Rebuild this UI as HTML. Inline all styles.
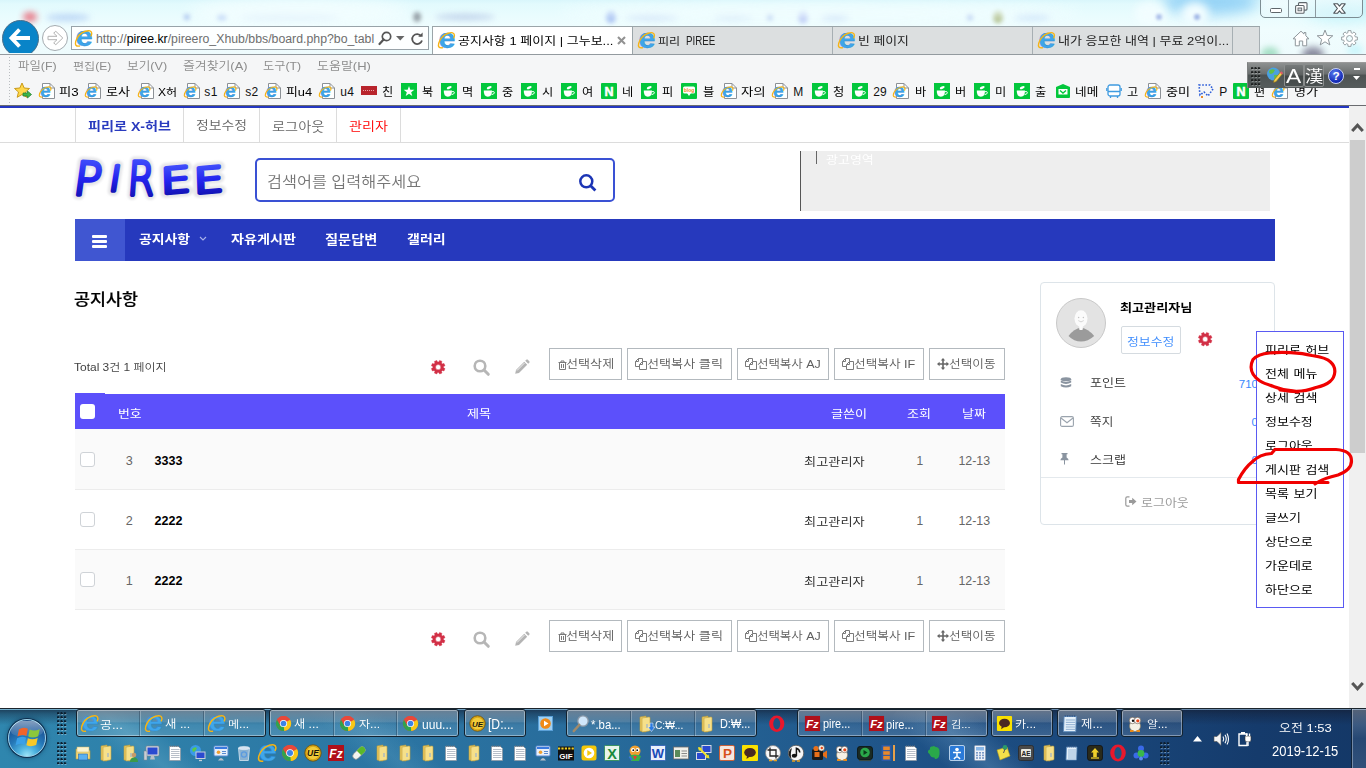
<!DOCTYPE html>
<html lang="ko">
<head>
<meta charset="utf-8">
<title>공지사항 1 페이지 | 그누보드5</title>
<style>
*{box-sizing:border-box;margin:0;padding:0}
html,body{width:1366px;height:768px;overflow:hidden;background:#fff}
body{font-family:"Liberation Sans","Noto Sans CJK KR","NanumGothic",sans-serif;font-size:12px;color:#000}
#screen{position:absolute;left:0;top:0;width:1366px;height:768px;overflow:hidden;background:#fff}
.p{position:absolute;white-space:nowrap}
svg.p{overflow:visible}
</style>
</head>
<body>
<div id="screen">
<!-- ===== PAGE ===== -->
<div class="p" style="left:0px;top:105px;width:1366px;height:1px;background:#6a6c70"></div>
<div class="p" style="left:0px;top:106px;width:1349px;height:2px;background:#2437c0"></div>
<div class="p" style="left:75px;top:108px;width:1px;height:34px;background:#dcdcdc"></div>
<div class="p" style="left:183px;top:108px;width:1px;height:34px;background:#dcdcdc"></div>
<div class="p" style="left:259px;top:108px;width:1px;height:34px;background:#dcdcdc"></div>
<div class="p" style="left:336px;top:108px;width:1px;height:34px;background:#dcdcdc"></div>
<div class="p" style="left:400px;top:108px;width:1px;height:34px;background:#dcdcdc"></div>
<div class="p" style="left:0px;top:142px;width:1350px;height:1px;background:#dcdcdc"></div>
<div class="p" style="left:87.7px;top:117.5px;font-size:12.5px;line-height:18px;color:#2a3bbf;font-weight:bold;transform:scaleX(1.13);transform-origin:0 50%;">피리로 X-허브</div>
<div class="p" style="left:195.6px;top:118.0px;font-size:12.3px;line-height:17px;color:#666;font-weight:350;transform:scaleX(1.13);transform-origin:0 50%;">정보수정</div>
<div class="p" style="left:271.7px;top:117.5px;font-size:12.6px;line-height:18px;color:#666;font-weight:350;transform:scaleX(1.13);transform-origin:0 50%;">로그아웃</div>
<div class="p" style="left:348.7px;top:117.5px;font-size:12.5px;line-height:18px;color:#f00;font-weight:350;transform:scaleX(1.13);transform-origin:0 50%;">관리자</div>
<svg class="p" style="left:70px;top:150px;" width="165" height="58" viewBox="0 0 165 58"><defs><linearGradient id="lg" x1="0" y1="0" x2="0" y2="1"><stop offset="0" stop-color="#4a5cff"/><stop offset=".5" stop-color="#2323ee"/><stop offset="1" stop-color="#0c0c9c"/></linearGradient>
<filter id="glow" x="-20%" y="-30%" width="140%" height="160%"><feGaussianBlur stdDeviation="1.2"/></filter></defs>
<g font-family="'DejaVu Sans Light','DejaVu Sans','Liberation Sans',sans-serif" font-style="normal" font-weight="200" stroke-linejoin="round" stroke-linecap="round">
<g fill="#e6e6e9" stroke="#e6e6e9" stroke-width="9.500" filter="url(#glow)"><text transform="rotate(3 19.6 28.6) translate(3.2 45.4) skewX(-5) scale(0.978 1)" font-size="46.0">P</text><text transform="rotate(2 45.4 28.4) translate(38.7 41.1) skewX(-7) scale(1.000 1)" font-size="35.0">I</text><text transform="rotate(0 72.8 28.5) translate(56.8 45.4) skewX(-4) scale(0.834 1)" font-size="46.4">R</text><text transform="rotate(-5 106.5 29.6) translate(90.2 42.3) skewX(-3) scale(1.351 1)" font-size="34.8">E</text><text transform="rotate(-5 139.4 29.5) translate(123.2 42.1) skewX(-3) scale(1.355 1)" font-size="34.6">E</text></g>
<g fill="url(#lg)" stroke="url(#lg)" stroke-width="3.800"><text transform="rotate(3 19.6 28.6) translate(3.2 45.4) skewX(-5) scale(0.978 1)" font-size="46.0">P</text><text transform="rotate(2 45.4 28.4) translate(38.7 41.1) skewX(-7) scale(1.000 1)" font-size="35.0">I</text><text transform="rotate(0 72.8 28.5) translate(56.8 45.4) skewX(-4) scale(0.834 1)" font-size="46.4">R</text><text transform="rotate(-5 106.5 29.6) translate(90.2 42.3) skewX(-3) scale(1.351 1)" font-size="34.8">E</text><text transform="rotate(-5 139.4 29.5) translate(123.2 42.1) skewX(-3) scale(1.355 1)" font-size="34.6">E</text></g>
</g></svg>
<div class="p" style="left:255px;top:158px;width:360px;height:44px;border:2px solid #3a51d4;border-radius:5px;background:#fff"></div>
<div class="p" style="left:267.0px;top:172.0px;font-size:14.4px;line-height:20px;color:#767676;font-weight:350;transform:scaleX(1.13);transform-origin:0 50%;">검색어를 입력해주세요</div>
<svg class="p" style="left:578.3px;top:172.7px;" width="20" height="20" viewBox="0 0 20 20"><circle cx="8.300" cy="8.300" r="6" fill="none" stroke="#1c35b5" stroke-width="2.500"/><path d="M12.400 12.400 L17.400 17.400" stroke="#1c35b5" stroke-width="2.800" stroke-linecap="butt"/></svg>
<div class="p" style="left:801px;top:151px;width:469px;height:60px;background:#eee"></div>
<div class="p" style="left:800px;top:151px;width:1px;height:60px;background:#555"></div>
<div class="p" style="left:816px;top:151px;width:1px;height:13px;background:#666"></div>
<div class="p" style="left:826.4px;top:151.7px;font-size:11.5px;line-height:16px;color:#fff;font-weight:350;transform:scaleX(1.13);transform-origin:0 50%;font-weight:400;">광고영역</div>
<div class="p" style="left:75px;top:219px;width:1200px;height:42px;background:#2639bd"></div>
<div class="p" style="left:75px;top:219px;width:50px;height:42px;background:#4056d1"></div>
<div class="p" style="left:92px;top:235px;width:15px;height:3px;background:#fff;border-radius:1px"></div>
<div class="p" style="left:92px;top:240px;width:15px;height:3px;background:#fff;border-radius:1px"></div>
<div class="p" style="left:92px;top:245px;width:15px;height:3px;background:#fff;border-radius:1px"></div>
<div class="p" style="left:139.0px;top:231.7px;font-size:12.3px;line-height:17px;color:#fff;font-weight:bold;transform:scaleX(1.13);transform-origin:0 50%;">공지사항</div>
<svg class="p" style="left:199px;top:236px;" width="8" height="6" viewBox="0 0 8 6"><path d="M1 1 L4 4 L7 1" fill="none" stroke="#aab3ea" stroke-width="1.1"/></svg>
<div class="p" style="left:230.7px;top:231.2px;font-size:12.5px;line-height:18px;color:#fff;font-weight:bold;transform:scaleX(1.13);transform-origin:0 50%;">자유게시판</div>
<div class="p" style="left:325.3px;top:231.2px;font-size:12.6px;line-height:18px;color:#fff;font-weight:bold;transform:scaleX(1.13);transform-origin:0 50%;">질문답변</div>
<div class="p" style="left:407.0px;top:231.7px;font-size:12.4px;line-height:17px;color:#fff;font-weight:bold;transform:scaleX(1.13);transform-origin:0 50%;">갤러리</div>
<div class="p" style="left:74.0px;top:288.7px;font-size:15.4px;line-height:22px;color:#000;font-weight:bold;transform:scaleX(1.13);transform-origin:0 50%;font-weight:500;-webkit-text-stroke:.2px #000;">공지사항</div>
<div class="p" style="left:74.4px;top:359.7px;font-size:10.6px;line-height:15px;color:#444;font-weight:350;transform:scaleX(1.13);transform-origin:0 50%;">Total 3건 1 페이지</div>
<svg class="p" style="left:430.9px;top:359.6px;" width="14.4" height="14.4" viewBox="0 0 16 16"><path fill-rule="evenodd" fill="#d23046" stroke="#d23046" stroke-width=".5" stroke-linejoin="round" d="M13.85 8.74 L15.54 9.56 L14.44 12.23 L12.66 11.62 L11.62 12.66 L12.23 14.44 L9.56 15.54 L8.74 13.85 L7.26 13.85 L6.44 15.54 L3.77 14.44 L4.38 12.66 L3.34 11.62 L1.56 12.23 L0.46 9.56 L2.15 8.74 L2.15 7.26 L0.46 6.44 L1.56 3.77 L3.34 4.38 L4.38 3.34 L3.77 1.56 L6.44 0.46 L7.26 2.15 L8.74 2.15 L9.56 0.46 L12.23 1.56 L11.62 3.34 L12.66 4.38 L14.44 3.77 L15.54 6.44 L13.85 7.26Z M10.90 8.00 A2.9 2.9 0 1 0 5.10 8.00 A2.9 2.9 0 1 0 10.90 8.00Z"/></svg>
<svg class="p" style="left:473.0px;top:358.5px;" width="17" height="17" viewBox="0 0 17 17"><circle cx="7" cy="7" r="5.300" fill="none" stroke="#b6b6b6" stroke-width="2.600"/><path d="M11 11 L15.300 15.300" stroke="#b6b6b6" stroke-width="3" stroke-linecap="round"/></svg>
<svg class="p" style="left:513.5px;top:359.0px;" width="16" height="16" viewBox="0 0 16 16"><path fill="#b4b4b4" d="M1.2 14.8 L2 11 L10.2 2.8 L13.2 5.8 L5 14 Z M11.2 1.8 L12.3 .7 Q13 0 13.8 .7 L15.3 2.2 Q16 3 15.3 3.7 L14.2 4.8 Z"/><path d="M3 11.5 L10.5 4" stroke="#fff" stroke-width=".8"/></svg>
<div class="p" style="left:549px;top:348px;width:73px;height:32px;border:1px solid #b3b9be;background:#fff"></div>
<div class="p" style="left:627px;top:348px;width:105px;height:32px;border:1px solid #b3b9be;background:#fff"></div>
<div class="p" style="left:737px;top:348px;width:92px;height:32px;border:1px solid #b3b9be;background:#fff"></div>
<div class="p" style="left:834px;top:348px;width:90px;height:32px;border:1px solid #b3b9be;background:#fff"></div>
<div class="p" style="left:929px;top:348px;width:76px;height:32px;border:1px solid #b3b9be;background:#fff"></div>
<svg class="p" style="left:557.5px;top:359.5px;" width="9" height="10" viewBox="0 0 9 10"><path fill="none" stroke="#7a7a7a" stroke-width="1" d="M.5 2.5 H8.5 M3 2.5 V1 H6 V2.5 M1.5 2.5 V9.5 H7.5 V2.5 M3.5 4 V8 M5.5 4 V8"/></svg>
<div class="p" style="left:566.1px;top:356.3px;font-size:11.6px;line-height:16px;color:#5e5e5e;font-weight:350;transform:scaleX(1.13);transform-origin:0 50%;">선택삭제</div>
<svg class="p" style="left:635px;top:357.5px;" width="12" height="12" viewBox="0 0 12 12"><path fill="#fff" stroke="#7a7a7a" stroke-width="1" d="M3.5 .5 H7.5 V3 M3.5 .5 L.5 3.5 V8.5 H4.5 M3.5 .5 V3.5 H.5"/><path fill="#fff" stroke="#7a7a7a" stroke-width="1" d="M7.5 3.5 H11.5 V11.5 H4.5 V6.5 Z M7.5 3.5 V6.5 H4.5"/></svg>
<div class="p" style="left:647.2px;top:356.3px;font-size:11.6px;line-height:16px;color:#5e5e5e;font-weight:350;transform:scaleX(1.13);transform-origin:0 50%;">선택복사 클릭</div>
<svg class="p" style="left:745px;top:357.5px;" width="12" height="12" viewBox="0 0 12 12"><path fill="#fff" stroke="#7a7a7a" stroke-width="1" d="M3.5 .5 H7.5 V3 M3.5 .5 L.5 3.5 V8.5 H4.5 M3.5 .5 V3.5 H.5"/><path fill="#fff" stroke="#7a7a7a" stroke-width="1" d="M7.5 3.5 H11.5 V11.5 H4.5 V6.5 Z M7.5 3.5 V6.5 H4.5"/></svg>
<div class="p" style="left:756.8px;top:356.8px;font-size:11.0px;line-height:15px;color:#5e5e5e;font-weight:350;transform:scaleX(1.13);transform-origin:0 50%;">선택복사 AJ</div>
<svg class="p" style="left:842px;top:357.5px;" width="12" height="12" viewBox="0 0 12 12"><path fill="#fff" stroke="#7a7a7a" stroke-width="1" d="M3.5 .5 H7.5 V3 M3.5 .5 L.5 3.5 V8.5 H4.5 M3.5 .5 V3.5 H.5"/><path fill="#fff" stroke="#7a7a7a" stroke-width="1" d="M7.5 3.5 H11.5 V11.5 H4.5 V6.5 Z M7.5 3.5 V6.5 H4.5"/></svg>
<div class="p" style="left:854.4px;top:356.3px;font-size:11.2px;line-height:16px;color:#5e5e5e;font-weight:350;transform:scaleX(1.13);transform-origin:0 50%;">선택복사 IF</div>
<svg class="p" style="left:936.5px;top:357.5px;" width="12" height="12" viewBox="0 0 12 12"><path fill="#666" d="M6 0 L8.2 2.6 H6.8 V5.2 H9.4 V3.8 L12 6 L9.4 8.2 V6.8 H6.8 V9.4 H8.2 L6 12 L3.8 9.4 H5.2 V6.8 H2.6 V8.2 L0 6 L2.6 3.8 V5.2 H5.2 V2.6 H3.8 Z"/></svg>
<div class="p" style="left:949.4px;top:356.3px;font-size:11.2px;line-height:16px;color:#5e5e5e;font-weight:350;transform:scaleX(1.13);transform-origin:0 50%;">선택이동</div>
<svg class="p" style="left:430.9px;top:631.6px;" width="14.4" height="14.4" viewBox="0 0 16 16"><path fill-rule="evenodd" fill="#d23046" stroke="#d23046" stroke-width=".5" stroke-linejoin="round" d="M13.85 8.74 L15.54 9.56 L14.44 12.23 L12.66 11.62 L11.62 12.66 L12.23 14.44 L9.56 15.54 L8.74 13.85 L7.26 13.85 L6.44 15.54 L3.77 14.44 L4.38 12.66 L3.34 11.62 L1.56 12.23 L0.46 9.56 L2.15 8.74 L2.15 7.26 L0.46 6.44 L1.56 3.77 L3.34 4.38 L4.38 3.34 L3.77 1.56 L6.44 0.46 L7.26 2.15 L8.74 2.15 L9.56 0.46 L12.23 1.56 L11.62 3.34 L12.66 4.38 L14.44 3.77 L15.54 6.44 L13.85 7.26Z M10.90 8.00 A2.9 2.9 0 1 0 5.10 8.00 A2.9 2.9 0 1 0 10.90 8.00Z"/></svg>
<svg class="p" style="left:473.0px;top:630.5px;" width="17" height="17" viewBox="0 0 17 17"><circle cx="7" cy="7" r="5.300" fill="none" stroke="#b6b6b6" stroke-width="2.600"/><path d="M11 11 L15.300 15.300" stroke="#b6b6b6" stroke-width="3" stroke-linecap="round"/></svg>
<svg class="p" style="left:513.5px;top:631.0px;" width="16" height="16" viewBox="0 0 16 16"><path fill="#b4b4b4" d="M1.2 14.8 L2 11 L10.2 2.8 L13.2 5.8 L5 14 Z M11.2 1.8 L12.3 .7 Q13 0 13.8 .7 L15.3 2.2 Q16 3 15.3 3.7 L14.2 4.8 Z"/><path d="M3 11.5 L10.5 4" stroke="#fff" stroke-width=".8"/></svg>
<div class="p" style="left:549px;top:620px;width:73px;height:32px;border:1px solid #b3b9be;background:#fff"></div>
<div class="p" style="left:627px;top:620px;width:105px;height:32px;border:1px solid #b3b9be;background:#fff"></div>
<div class="p" style="left:737px;top:620px;width:92px;height:32px;border:1px solid #b3b9be;background:#fff"></div>
<div class="p" style="left:834px;top:620px;width:90px;height:32px;border:1px solid #b3b9be;background:#fff"></div>
<div class="p" style="left:929px;top:620px;width:76px;height:32px;border:1px solid #b3b9be;background:#fff"></div>
<svg class="p" style="left:557.5px;top:631.5px;" width="9" height="10" viewBox="0 0 9 10"><path fill="none" stroke="#7a7a7a" stroke-width="1" d="M.5 2.5 H8.5 M3 2.5 V1 H6 V2.5 M1.5 2.5 V9.5 H7.5 V2.5 M3.5 4 V8 M5.5 4 V8"/></svg>
<div class="p" style="left:566.1px;top:628.3px;font-size:11.6px;line-height:16px;color:#5e5e5e;font-weight:350;transform:scaleX(1.13);transform-origin:0 50%;">선택삭제</div>
<svg class="p" style="left:635px;top:629.5px;" width="12" height="12" viewBox="0 0 12 12"><path fill="#fff" stroke="#7a7a7a" stroke-width="1" d="M3.5 .5 H7.5 V3 M3.5 .5 L.5 3.5 V8.5 H4.5 M3.5 .5 V3.5 H.5"/><path fill="#fff" stroke="#7a7a7a" stroke-width="1" d="M7.5 3.5 H11.5 V11.5 H4.5 V6.5 Z M7.5 3.5 V6.5 H4.5"/></svg>
<div class="p" style="left:647.2px;top:628.3px;font-size:11.6px;line-height:16px;color:#5e5e5e;font-weight:350;transform:scaleX(1.13);transform-origin:0 50%;">선택복사 클릭</div>
<svg class="p" style="left:745px;top:629.5px;" width="12" height="12" viewBox="0 0 12 12"><path fill="#fff" stroke="#7a7a7a" stroke-width="1" d="M3.5 .5 H7.5 V3 M3.5 .5 L.5 3.5 V8.5 H4.5 M3.5 .5 V3.5 H.5"/><path fill="#fff" stroke="#7a7a7a" stroke-width="1" d="M7.5 3.5 H11.5 V11.5 H4.5 V6.5 Z M7.5 3.5 V6.5 H4.5"/></svg>
<div class="p" style="left:756.8px;top:628.8px;font-size:11.0px;line-height:15px;color:#5e5e5e;font-weight:350;transform:scaleX(1.13);transform-origin:0 50%;">선택복사 AJ</div>
<svg class="p" style="left:842px;top:629.5px;" width="12" height="12" viewBox="0 0 12 12"><path fill="#fff" stroke="#7a7a7a" stroke-width="1" d="M3.5 .5 H7.5 V3 M3.5 .5 L.5 3.5 V8.5 H4.5 M3.5 .5 V3.5 H.5"/><path fill="#fff" stroke="#7a7a7a" stroke-width="1" d="M7.5 3.5 H11.5 V11.5 H4.5 V6.5 Z M7.5 3.5 V6.5 H4.5"/></svg>
<div class="p" style="left:854.4px;top:628.3px;font-size:11.2px;line-height:16px;color:#5e5e5e;font-weight:350;transform:scaleX(1.13);transform-origin:0 50%;">선택복사 IF</div>
<svg class="p" style="left:936.5px;top:629.5px;" width="12" height="12" viewBox="0 0 12 12"><path fill="#666" d="M6 0 L8.2 2.6 H6.8 V5.2 H9.4 V3.8 L12 6 L9.4 8.2 V6.8 H6.8 V9.4 H8.2 L6 12 L3.8 9.4 H5.2 V6.8 H2.6 V8.2 L0 6 L2.6 3.8 V5.2 H5.2 V2.6 H3.8 Z"/></svg>
<div class="p" style="left:949.4px;top:628.3px;font-size:11.2px;line-height:16px;color:#5e5e5e;font-weight:350;transform:scaleX(1.13);transform-origin:0 50%;">선택이동</div>
<div class="p" style="left:75px;top:394px;width:930px;height:35px;background:#5c50fb"></div>
<div class="p" style="left:75px;top:393px;width:30px;height:2px;background:#5c50fb"></div>
<div class="p" style="left:80px;top:404px;width:15px;height:15px;background:#fff;border-radius:3px"></div>
<div class="p" style="left:118.0px;top:405.8px;font-size:11.4px;line-height:16px;color:#fff;font-weight:350;transform:scaleX(1.13);transform-origin:0 50%;font-weight:400;">번호</div>
<div class="p" style="left:467.4px;top:405.8px;font-size:11.6px;line-height:16px;color:#fff;font-weight:350;transform:scaleX(1.13);transform-origin:0 50%;font-weight:400;">제목</div>
<div class="p" style="left:831.2px;top:405.8px;font-size:11.6px;line-height:16px;color:#fff;font-weight:350;transform:scaleX(1.13);transform-origin:0 50%;font-weight:400;">글쓴이</div>
<div class="p" style="left:907.4px;top:405.8px;font-size:11.5px;line-height:16px;color:#fff;font-weight:350;transform:scaleX(1.13);transform-origin:0 50%;font-weight:400;">조회</div>
<div class="p" style="left:962.4px;top:405.8px;font-size:11.5px;line-height:16px;color:#fff;font-weight:350;transform:scaleX(1.13);transform-origin:0 50%;font-weight:400;">날짜</div>
<div class="p" style="left:75px;top:429px;width:930px;height:60px;background:#fafafa"></div>
<div class="p" style="left:75px;top:489px;width:930px;height:1px;background:#ececec"></div>
<div class="p" style="left:75px;top:549px;width:930px;height:1px;background:#ececec"></div>
<div class="p" style="left:75px;top:550px;width:930px;height:59px;background:#fafafa"></div>
<div class="p" style="left:75px;top:609px;width:930px;height:1px;background:#ececec"></div>
<div class="p" style="left:80px;top:452px;width:15px;height:15px;border:1px solid #cfd3d7;border-radius:3px;background:#fff"></div>
<div class="p" style="left:125.8px;top:452.1px;font-size:12.6px;line-height:18px;color:#666;">3</div>
<div class="p" style="left:154.6px;top:452.1px;font-size:12.5px;line-height:18px;color:#000;font-weight:bold;">3333</div>
<div class="p" style="left:803.9px;top:453.5px;font-size:11.7px;line-height:16px;color:#222;font-weight:350;transform:scaleX(1.13);transform-origin:0 50%;">최고관리자</div>
<div class="p" style="left:916.5px;top:452.6px;font-size:12px;line-height:17px;color:#666;">1</div>
<div class="p" style="left:958.4px;top:452.6px;font-size:12.4px;line-height:17px;color:#666;">12-13</div>
<div class="p" style="left:80px;top:512px;width:15px;height:15px;border:1px solid #cfd3d7;border-radius:3px;background:#fff"></div>
<div class="p" style="left:125.8px;top:512.1px;font-size:12.6px;line-height:18px;color:#666;">2</div>
<div class="p" style="left:154.6px;top:512.1px;font-size:12.5px;line-height:18px;color:#000;font-weight:bold;">2222</div>
<div class="p" style="left:803.9px;top:513.5px;font-size:11.7px;line-height:16px;color:#222;font-weight:350;transform:scaleX(1.13);transform-origin:0 50%;">최고관리자</div>
<div class="p" style="left:916.5px;top:512.6px;font-size:12px;line-height:17px;color:#666;">1</div>
<div class="p" style="left:958.4px;top:512.6px;font-size:12.4px;line-height:17px;color:#666;">12-13</div>
<div class="p" style="left:80px;top:572px;width:15px;height:15px;border:1px solid #cfd3d7;border-radius:3px;background:#fff"></div>
<div class="p" style="left:125.8px;top:572.1px;font-size:12.6px;line-height:18px;color:#666;">1</div>
<div class="p" style="left:154.6px;top:572.1px;font-size:12.5px;line-height:18px;color:#000;font-weight:bold;">2222</div>
<div class="p" style="left:803.9px;top:573.5px;font-size:11.7px;line-height:16px;color:#222;font-weight:350;transform:scaleX(1.13);transform-origin:0 50%;">최고관리자</div>
<div class="p" style="left:916.5px;top:572.6px;font-size:12px;line-height:17px;color:#666;">1</div>
<div class="p" style="left:958.4px;top:572.6px;font-size:12.4px;line-height:17px;color:#666;">12-13</div>
<div class="p" style="left:1040px;top:282px;width:235px;height:243px;border:1px solid #dde4e9;border-radius:4px;background:#fff"></div>
<div class="p" style="left:1041px;top:477px;width:233px;height:1px;background:#e4e9ed"></div>
<div class="p" style="left:1056px;top:298px;width:50px;height:50px;border-radius:50%;background:#e3e3e3;border:1px solid #c9c9c9;overflow:hidden"><svg width="48" height="48" viewBox="0 0 48 48"><path d="M11.500 37 Q17 29.500 24 28.500 Q31 29.500 37.200 37 Q31 42.600 24 42.600 Q17 42.600 11.500 37Z" fill="#9b9b9b"/><ellipse cx="24" cy="19.600" rx="6.500" ry="8.400" fill="#fbfbfb"/><path d="M22.200 26 h3.600 v4.600 q-1.800 1 -3.600 0z" fill="#fbfbfb"/><circle cx="21.600" cy="18.600" r=".75" fill="#c4c4c4"/><circle cx="26.400" cy="18.600" r=".75" fill="#c4c4c4"/><path d="M21.300 21.600 Q24 24.200 26.700 21.600" stroke="#c4c4c4" stroke-width=".7" fill="none"/></svg></div>
<div class="p" style="left:1119.7px;top:300.1px;font-size:11.6px;line-height:16px;color:#000;font-weight:bold;transform:scaleX(1.13);transform-origin:0 50%;">최고관리자님</div>
<div class="p" style="left:1121px;top:326px;width:60px;height:28px;border:1px solid #d5dbe0;border-radius:2px;background:#fff"></div>
<div class="p" style="left:1126.8px;top:333.5px;font-size:11.4px;line-height:16px;color:#3a8afd;font-weight:350;transform:scaleX(1.13);transform-origin:0 50%;">정보수정</div>
<svg class="p" style="left:1198.3px;top:332.3px;" width="14.4" height="14.4" viewBox="0 0 16 16"><path fill-rule="evenodd" fill="#d23046" stroke="#d23046" stroke-width=".5" stroke-linejoin="round" d="M13.85 8.74 L15.54 9.56 L14.44 12.23 L12.66 11.62 L11.62 12.66 L12.23 14.44 L9.56 15.54 L8.74 13.85 L7.26 13.85 L6.44 15.54 L3.77 14.44 L4.38 12.66 L3.34 11.62 L1.56 12.23 L0.46 9.56 L2.15 8.74 L2.15 7.26 L0.46 6.44 L1.56 3.77 L3.34 4.38 L4.38 3.34 L3.77 1.56 L6.44 0.46 L7.26 2.15 L8.74 2.15 L9.56 0.46 L12.23 1.56 L11.62 3.34 L12.66 4.38 L14.44 3.77 L15.54 6.44 L13.85 7.26Z M10.90 8.00 A2.9 2.9 0 1 0 5.10 8.00 A2.9 2.9 0 1 0 10.90 8.00Z"/></svg>
<svg class="p" style="left:1060px;top:377px;" width="12" height="12" viewBox="0 0 12 12"><g fill="#8a94a0"><ellipse cx="6" cy="2.2" rx="5.2" ry="2"/><path d="M.8 3.6 Q6 6.4 11.200 3.600 V5.6 Q6 8.4 .8 5.6Z"/><path d="M.8 7 Q6 9.800 11.200 7 V9.200 Q6 12 .8 9.200Z"/></g></svg>
<svg class="p" style="left:1060px;top:416px;" width="14" height="11" viewBox="0 0 14 11"><rect x=".6" y=".6" width="12.8" height="9.8" rx="1.5" fill="none" stroke="#9aa3ad" stroke-width="1.1"/><path d="M1 2 L7 6.8 L13 2" fill="none" stroke="#9aa3ad" stroke-width="1.1"/></svg>
<svg class="p" style="left:1060px;top:453px;" width="9" height="12" viewBox="0 0 9 12"><path fill="#8a94a0" d="M1.500 0 H7.500 V1.2 H6.6 V4.500 Q8.6 5.500 8.6 7.200 H5 V11 L4.500 12 L4 11 V7.200 H.4 Q.4 5.500 2.400 4.500 V1.2 H1.500Z"/></svg>
<div class="p" style="left:1090.4px;top:375.4px;font-size:11.6px;line-height:16px;color:#333;font-weight:350;transform:scaleX(1.13);transform-origin:0 50%;">포인트</div>
<div class="p" style="left:1090.4px;top:413.6px;font-size:11.2px;line-height:16px;color:#333;font-weight:350;transform:scaleX(1.13);transform-origin:0 50%;">쪽지</div>
<div class="p" style="left:1090.4px;top:451.7px;font-size:11.6px;line-height:16px;color:#333;font-weight:350;transform:scaleX(1.13);transform-origin:0 50%;">스크랩</div>
<div class="p" style="left:1238.8px;top:375.7px;font-size:11.5px;line-height:16px;color:#3a8afd;">710</div>
<div class="p" style="left:1251.6px;top:413.7px;font-size:11.5px;line-height:16px;color:#3a8afd;">0</div>
<div class="p" style="left:1251.6px;top:451.7px;font-size:11.5px;line-height:16px;color:#3a8afd;">0</div>
<svg class="p" style="left:1125px;top:496px;" width="12" height="11" viewBox="0 0 12 11"><path fill="none" stroke="#9a9a9a" stroke-width="1.2" d="M4.500 .8 H2.200 Q.8 .8 .8 2.200 V8.800 Q.8 10.200 2.200 10.200 H4.500"/><path fill="#9a9a9a" d="M4 4 H7.200 V1.800 L11.500 5.500 L7.200 9.200 V7 H4Z"/></svg>
<div class="p" style="left:1140.6px;top:494.6px;font-size:11.5px;line-height:16px;color:#9c9c9c;font-weight:350;transform:scaleX(1.13);transform-origin:0 50%;font-weight:400;">로그아웃</div>
<div class="p" style="left:1349px;top:106px;width:17px;height:602px;background:#f0f0f0"></div>
<div class="p" style="left:1350px;top:140px;width:15px;height:313px;background:#cdcdcd"></div>
<svg class="p" style="left:1351px;top:122px;" width="13" height="11" viewBox="0 0 13 11"><path d="M1.200 9 L6.500 3.200 L11.800 9" fill="none" stroke="#555" stroke-width="3" stroke-linejoin="miter"/></svg>
<svg class="p" style="left:1351px;top:681px;" width="13" height="11" viewBox="0 0 13 11"><path d="M1.200 2 L6.500 7.800 L11.800 2" fill="none" stroke="#555" stroke-width="3" stroke-linejoin="miter"/></svg>
<div class="p" style="left:1256px;top:331px;width:88px;height:277px;border:1px solid #5a5af2;background:#fff"></div>
<div class="p" style="left:1264.6px;top:341.7px;font-size:11.5px;line-height:16px;color:#000;font-weight:350;transform:scaleX(1.13);transform-origin:0 50%;word-spacing:.8px;font-weight:400;">피리로 허브</div>
<div class="p" style="left:1264.6px;top:365.7px;font-size:11.5px;line-height:16px;color:#000;font-weight:350;transform:scaleX(1.13);transform-origin:0 50%;word-spacing:.8px;font-weight:400;">전체 메뉴</div>
<div class="p" style="left:1264.6px;top:389.7px;font-size:11.5px;line-height:16px;color:#000;font-weight:350;transform:scaleX(1.13);transform-origin:0 50%;word-spacing:.8px;font-weight:400;">상세 검색</div>
<div class="p" style="left:1264.6px;top:413.7px;font-size:11.5px;line-height:16px;color:#000;font-weight:350;transform:scaleX(1.13);transform-origin:0 50%;word-spacing:.8px;font-weight:400;">정보수정</div>
<div class="p" style="left:1264.6px;top:437.7px;font-size:11.5px;line-height:16px;color:#000;font-weight:350;transform:scaleX(1.13);transform-origin:0 50%;word-spacing:.8px;font-weight:400;">로그아웃</div>
<div class="p" style="left:1264.6px;top:461.7px;font-size:11.5px;line-height:16px;color:#000;font-weight:350;transform:scaleX(1.13);transform-origin:0 50%;word-spacing:.8px;font-weight:400;">게시판 검색</div>
<div class="p" style="left:1264.6px;top:485.7px;font-size:11.5px;line-height:16px;color:#000;font-weight:350;transform:scaleX(1.13);transform-origin:0 50%;word-spacing:.8px;font-weight:400;">목록 보기</div>
<div class="p" style="left:1264.6px;top:509.7px;font-size:11.5px;line-height:16px;color:#000;font-weight:350;transform:scaleX(1.13);transform-origin:0 50%;word-spacing:.8px;font-weight:400;">글쓰기</div>
<div class="p" style="left:1264.6px;top:533.7px;font-size:11.5px;line-height:16px;color:#000;font-weight:350;transform:scaleX(1.13);transform-origin:0 50%;word-spacing:.8px;font-weight:400;">상단으로</div>
<div class="p" style="left:1264.6px;top:557.7px;font-size:11.5px;line-height:16px;color:#000;font-weight:350;transform:scaleX(1.13);transform-origin:0 50%;word-spacing:.8px;font-weight:400;">가운데로</div>
<div class="p" style="left:1264.6px;top:581.7px;font-size:11.5px;line-height:16px;color:#000;font-weight:350;transform:scaleX(1.13);transform-origin:0 50%;word-spacing:.8px;font-weight:400;">하단으로</div>
<div class="p" style="left:1257px;top:338px;width:86px;height:6.5px;background:#fff"></div>
<svg class="p" style="left:1230px;top:340px;" width="136" height="160" viewBox="0 0 136 160"><g fill="none" stroke="#f00000" stroke-width="3.2" stroke-linecap="round" stroke-linejoin="round"><path d="M23 19.500 C27 15 33 13.500 39.500 13 C52 11.500 70 12.500 82 15.500 C92 17 98 19 100.500 22 C104 25 105 29 104.800 32 C104.500 37 103 39 100 41.500 C96 45 91 46.500 86 47.500 C78 50.500 70 51.400 64.500 51.200 C57 51 50 49 45 47 C39 45 34 43.500 30 41 C24 37 21 32 21.100 27 C21.200 24 22 21.500 23 19.500 Z"/><path d="M50 50 L68 52"/><path d="M45 109.500 H106 C116 110 121.500 114 121.500 121 C121.500 128 116 132 108 135 C100 137 93 139 89 141.500 L85 144"/><path d="M45 109.500 L41.500 113.500 C33 114 27 117 22 122 C17 126 13 131 8.500 139.500 V142.500 H98"/></g></svg>
<!-- ===== WINDOW CHROME ===== -->
<div class="p" style="left:0px;top:0px;width:1366px;height:54px;background:linear-gradient(180deg,#d9f6fb 0,#e2fafd 4px,#e8fcfe 14px,#f0fdfe 30px,#eefbfd 54px);overflow:hidden"><div class="p" style="left:1162px;top:-11px;width:96px;height:26px;border-radius:50%;background:#8fd0f6;filter:blur(7px);opacity:0.9"></div><div class="p" style="left:1305px;top:-6px;width:80px;height:28px;border-radius:50%;background:#c2f3fa;filter:blur(8px);opacity:0.9"></div><div class="p" style="left:1261px;top:47px;width:18px;height:14px;border-radius:50%;background:#9fdcc0;filter:blur(3px);opacity:0.9"></div><div class="p" style="left:1302px;top:47px;width:22px;height:16px;border-radius:50%;background:#85859a;filter:blur(3.5px);opacity:0.95"></div><div class="p" style="left:1347px;top:44px;width:16px;height:12px;border-radius:50%;background:#cdf6fb;filter:blur(3px);opacity:1"></div><div class="p" style="left:1181px;top:2px;width:28px;height:24px;border-radius:50%;background:#f2fdff;filter:blur(4px);opacity:1"></div><div class="p" style="left:1134px;top:2px;width:32px;height:24px;border-radius:50%;background:#f2fdff;filter:blur(4px);opacity:1"></div><div class="p" style="left:1194px;top:14px;width:6px;height:6px;border-radius:50%;background:#9fb5e6;filter:blur(1.5px);opacity:1"></div><div class="p" style="left:1156px;top:14px;width:6px;height:6px;border-radius:50%;background:#aabdea;filter:blur(1.5px);opacity:1"></div><div class="p" style="left:23px;top:12px;width:14px;height:10px;border-radius:50%;background:#e8707f;filter:blur(3px);opacity:0.9"></div><div class="p" style="left:46px;top:13.5px;width:44px;height:7.0px;border-radius:50%;background:#b4d0f4;filter:blur(3px);opacity:0.85"></div><div class="p" style="left:184px;top:14px;width:6px;height:6px;border-radius:50%;background:#a9c3ee;filter:blur(2px);opacity:1"></div><div class="p" style="left:217px;top:14px;width:10px;height:6px;border-radius:50%;background:#8fb0ee;filter:blur(2px);opacity:1"></div><div class="p" style="left:240px;top:13.0px;width:100px;height:7.0px;border-radius:50%;background:#bcd6f4;filter:blur(3px);opacity:0.8"></div><div class="p" style="left:413px;top:12px;width:8px;height:10px;border-radius:50%;background:#7e868e;filter:blur(2px);opacity:0.8"></div><div class="p" style="left:435px;top:14px;width:60px;height:6px;border-radius:50%;background:#b6c8e6;filter:blur(3px);opacity:0.8"></div><div class="p" style="left:606px;top:11px;width:10px;height:12px;border-radius:50%;background:#9bb6f0;filter:blur(2px);opacity:1"></div><div class="p" style="left:626px;top:14px;width:52px;height:6px;border-radius:50%;background:#bdd3f4;filter:blur(3px);opacity:0.8"></div><div class="p" style="left:713px;top:14px;width:40px;height:6px;border-radius:50%;background:#c6dcf5;filter:blur(3px);opacity:0.8"></div><div class="p" style="left:767px;top:14px;width:6px;height:6px;border-radius:50%;background:#9db6ea;filter:blur(2px);opacity:1"></div><div class="p" style="left:798px;top:11px;width:10px;height:12px;border-radius:50%;background:#a6b6f2;filter:blur(2px);opacity:1"></div><div class="p" style="left:821px;top:14px;width:28px;height:6px;border-radius:50%;background:#b9d2f5;filter:blur(3px);opacity:0.9"></div><div class="p" style="left:967px;top:14px;width:6px;height:6px;border-radius:50%;background:#9db6ea;filter:blur(2px);opacity:1"></div><div class="p" style="left:993px;top:11px;width:10px;height:12px;border-radius:50%;background:#9aa860;filter:blur(2px);opacity:0.9"></div><div class="p" style="left:1014px;top:14px;width:36px;height:6px;border-radius:50%;background:#bcd6f6;filter:blur(3px);opacity:0.8"></div><div class="p" style="left:190px;top:-2px;width:220px;height:28px;border-radius:50%;background:#f4feff;filter:blur(7px);opacity:0.8"></div><div class="p" style="left:560px;top:4px;width:520px;height:16px;border-radius:50%;background:#f3feff;filter:blur(6px);opacity:0.8"></div></div>
<div class="p" style="left:0px;top:55px;width:1366px;height:50px;background:#f5f6f7"></div>
<div class="p" style="left:1px;top:19px;width:39px;height:34px;overflow:hidden"><div class="p" style="left:.5px;top:.6px;width:37px;height:37px;border-radius:50%;background:#0984c8;border:1px solid #4a6f8a"></div><svg class="p" style="left:7.500px;top:8.500px" width="22" height="20" viewBox="0 0 22 20"><path d="M10.500 1.500 L2.500 10 L10.500 18.500 M2.500 10 H21" fill="none" stroke="#fff" stroke-width="3.900" stroke-linecap="butt" stroke-linejoin="miter"/></svg></div>
<div class="p" style="left:42px;top:25px;width:26px;height:26px;border-radius:50%;background:#fff;border:1px solid #a4abb0"></div>
<svg class="p" style="left:47.3px;top:30.8px;" width="17" height="14" viewBox="0 0 17 14"><path d="M1 5.300 H10 L6.700 2.100 L8.800 .3 L15.800 7 L8.800 13.700 L6.700 11.900 L10 8.700 H1Z" fill="#fff" stroke="#b2b2b2" stroke-width="1" stroke-linejoin="miter"/></svg>
<div class="p" style="left:71px;top:26px;width:358px;height:24px;background:#fdffff;border:1px solid #98a3a9"></div>
<svg class="p" style="left:74.9px;top:30.3px;" width="16.8" height="16.8" viewBox="0 0 16 16"><text x="8.600" y="15.300" transform="translate(8.400 0) scale(1.130 1) translate(-8.400 0)" text-anchor="middle" font-family="'Liberation Sans',sans-serif" font-weight="bold" font-size="26" fill="#3fa6ea" stroke="#2a86d4" stroke-width=".35">e</text><path d="M4.200 15.300 Q-.6 16 .7 10.800 Q2.800 3.800 9.800 1.200 Q15.400 -.5 15.900 3 Q16 4.300 15.300 5.600" fill="none" stroke="#f6b414" stroke-width="1.350" stroke-linecap="round"/></svg>
<div class="p" style="left:95.9px;top:30.7px;font-size:12.3px;line-height:17px;color:#6e6e6e;">http://<span style="color:#000">piree.kr</span>/pireero_Xhub/bbs/board.php?bo_tabl</div>
<svg class="p" style="left:378px;top:31px;" width="14" height="15" viewBox="0 0 14 15"><circle cx="8.500" cy="5.500" r="4.200" fill="none" stroke="#555" stroke-width="1.700"/><path d="M5.600 8.600 L1.500 13" stroke="#555" stroke-width="2.200" stroke-linecap="round"/></svg>
<svg class="p" style="left:396px;top:36px;" width="9" height="5" viewBox="0 0 9 5"><path d="M0 0 H8.500 L4.250 4.500Z" fill="#666"/></svg>
<svg class="p" style="left:410px;top:31px;" width="14" height="15" viewBox="0 0 14 15"><path d="M11.200 5 A5 5 0 1 0 12 9.500" fill="none" stroke="#555" stroke-width="1.800"/><path d="M8.200 5.800 H12.600 V1.400Z" fill="#555"/></svg>
<div class="p" style="left:632px;top:26px;width:628px;height:28px;background:#dcdfe0;border-top:1px solid #9ba5a9"></div>
<div class="p" style="left:832px;top:27px;width:1px;height:27px;background:#a7afb3"></div>
<div class="p" style="left:1032px;top:27px;width:1px;height:27px;background:#a7afb3"></div>
<div class="p" style="left:1232px;top:27px;width:1px;height:27px;background:#a7afb3"></div>
<div class="p" style="left:1259px;top:27px;width:1px;height:27px;background:#a7afb3"></div>
<div class="p" style="left:432px;top:26px;width:201px;height:28px;background:#fff;border:1px solid #9ba5a9;border-bottom:none"></div>
<div class="p" style="left:0px;top:54px;width:1366px;height:1px;background:#939a9f"></div>
<svg class="p" style="left:438.3px;top:31.6px;" width="16.5" height="16.5" viewBox="0 0 16 16"><text x="8.600" y="15.300" transform="translate(8.400 0) scale(1.130 1) translate(-8.400 0)" text-anchor="middle" font-family="'Liberation Sans',sans-serif" font-weight="bold" font-size="26" fill="#3fa6ea" stroke="#2a86d4" stroke-width=".35">e</text><path d="M4.200 15.300 Q-.6 16 .7 10.800 Q2.800 3.800 9.800 1.200 Q15.400 -.5 15.900 3 Q16 4.300 15.300 5.600" fill="none" stroke="#f6b414" stroke-width="1.350" stroke-linecap="round"/></svg>
<svg class="p" style="left:637.7px;top:31.6px;" width="16.5" height="16.5" viewBox="0 0 16 16"><text x="8.600" y="15.300" transform="translate(8.400 0) scale(1.130 1) translate(-8.400 0)" text-anchor="middle" font-family="'Liberation Sans',sans-serif" font-weight="bold" font-size="26" fill="#3fa6ea" stroke="#2a86d4" stroke-width=".35">e</text><path d="M4.200 15.300 Q-.6 16 .7 10.800 Q2.800 3.800 9.800 1.200 Q15.400 -.5 15.900 3 Q16 4.300 15.300 5.600" fill="none" stroke="#f6b414" stroke-width="1.350" stroke-linecap="round"/></svg>
<svg class="p" style="left:837.7px;top:31.6px;" width="16.5" height="16.5" viewBox="0 0 16 16"><text x="8.600" y="15.300" transform="translate(8.400 0) scale(1.130 1) translate(-8.400 0)" text-anchor="middle" font-family="'Liberation Sans',sans-serif" font-weight="bold" font-size="26" fill="#3fa6ea" stroke="#2a86d4" stroke-width=".35">e</text><path d="M4.200 15.300 Q-.6 16 .7 10.800 Q2.800 3.800 9.800 1.200 Q15.400 -.5 15.900 3 Q16 4.300 15.300 5.600" fill="none" stroke="#f6b414" stroke-width="1.350" stroke-linecap="round"/></svg>
<svg class="p" style="left:1037.7px;top:31.6px;" width="16.5" height="16.5" viewBox="0 0 16 16"><text x="8.600" y="15.300" transform="translate(8.400 0) scale(1.130 1) translate(-8.400 0)" text-anchor="middle" font-family="'Liberation Sans',sans-serif" font-weight="bold" font-size="26" fill="#3fa6ea" stroke="#2a86d4" stroke-width=".35">e</text><path d="M4.200 15.300 Q-.6 16 .7 10.800 Q2.800 3.800 9.800 1.200 Q15.400 -.5 15.900 3 Q16 4.300 15.300 5.600" fill="none" stroke="#f6b414" stroke-width="1.350" stroke-linecap="round"/></svg>
<div class="p" style="left:457.9px;top:33.0px;font-size:11.5px;line-height:16px;color:#000;font-weight:350;transform:scaleX(1.13);transform-origin:0 50%;font-weight:400;">공지사항 1 페이지 | 그누보...</div>
<svg class="p" style="left:617px;top:36px;" width="9" height="9" viewBox="0 0 9 9"><path d="M1 1 L8 8 M8 1 L1 8" stroke="#929292" stroke-width="2.100"/></svg>
<div class="p" style="left:657.9px;top:33.5px;font-size:10.7px;line-height:15px;color:#222;font-weight:350;transform:scaleX(1.13);transform-origin:0 50%;font-weight:400;">피리</div>
<div class="p" style="left:685.9px;top:32.5px;font-size:12.2px;line-height:17px;color:#222;transform:scaleX(0.8);transform-origin:0 50%;">PIREE</div>
<div class="p" style="left:858.4px;top:33.0px;font-size:11.4px;line-height:16px;color:#222;font-weight:350;transform:scaleX(1.13);transform-origin:0 50%;font-weight:400;">빈 페이지</div>
<div class="p" style="left:1058.4px;top:33.0px;font-size:11.5px;line-height:16px;color:#222;font-weight:350;transform:scaleX(1.13);transform-origin:0 50%;font-weight:400;">내가 응모한 내역 | 무료 2억이...</div>
<svg class="p" style="left:1292px;top:30px;" width="18" height="17" viewBox="0 0 18 17"><path d="M9 1.200 L1 8.800 H3.300 V15.800 H7.300 V11 H10.700 V15.800 H14.700 V8.800 H17 L13.800 5.800 V2.500 H12 V4.100Z" fill="#fff" stroke="#8f979c" stroke-width="1" stroke-linejoin="round"/></svg>
<svg class="p" style="left:1316px;top:29px;" width="18" height="18" viewBox="0 0 18 18"><polygon points="9.00,1.10 11.06,6.47 16.80,6.77 12.33,10.38 13.82,15.93 9.00,12.80 4.18,15.93 5.67,10.38 1.20,6.77 6.94,6.47" fill="#fff" stroke="#8f979c" stroke-width="1" stroke-linejoin="round"/></svg>
<svg class="p" style="left:1341px;top:30px;" width="17" height="17" viewBox="0 0 17 17"><path fill-rule="evenodd" fill="#fff" stroke="#8f979c" stroke-width=".9" d="M14.29 6.92 L16.36 7.00 L16.36 10.00 L14.29 10.08 L13.71 11.47 L15.12 13.00 L13.00 15.12 L11.47 13.71 L10.08 14.29 L10.00 16.36 L7.00 16.36 L6.92 14.29 L5.53 13.71 L4.00 15.12 L1.88 13.00 L3.29 11.47 L2.71 10.08 L0.64 10.00 L0.64 7.00 L2.71 6.92 L3.29 5.53 L1.88 4.00 L4.00 1.88 L5.53 3.29 L6.92 2.71 L7.00 0.64 L10.00 0.64 L10.08 2.71 L11.47 3.29 L13.00 1.88 L15.12 4.00 L13.71 5.53Z M11.50 8.50 A3 3 0 1 0 5.50 8.50 A3 3 0 1 0 11.50 8.50Z"/></svg>
<div class="p" style="left:1260px;top:-2px;width:103px;height:20px;border:1px solid #7d8d93;border-radius:0 0 5px 5px;background:linear-gradient(180deg,rgba(255,255,255,.55),rgba(230,245,250,.35))"></div>
<div class="p" style="left:1288px;top:0px;width:1px;height:17px;background:#8c9aa0"></div>
<div class="p" style="left:1315px;top:0px;width:1px;height:17px;background:#8c9aa0"></div>
<div class="p" style="left:1270px;top:8px;width:12px;height:5px;background:#fff;border:1px solid #5f666b;border-radius:1.500px"></div>
<svg class="p" style="left:1295px;top:2px;" width="13" height="12" viewBox="0 0 13 12"><rect x="3.500" y=".6" width="8.500" height="7.500" rx="1" fill="#fff" stroke="#5f666b" stroke-width="1.100"/><rect x=".6" y="3.500" width="8.500" height="7.800" rx="1" fill="#fff" stroke="#5f666b" stroke-width="1.100"/><rect x="3" y="6" width="3.700" height="2.800" fill="#cfd6da" stroke="#5f666b" stroke-width=".9"/></svg>
<svg class="p" style="left:1333px;top:3px;" width="13" height="11" viewBox="0 0 13 11"><path d="M.8 .8 H4.600 L6.500 3.200 L8.400 .8 H12.200 L8.600 5.500 L12.200 10.200 H8.400 L6.500 7.800 L4.600 10.200 H.8 L4.400 5.500Z" fill="#fff" stroke="#4f565b" stroke-width="1.100" stroke-linejoin="round"/></svg>
<div class="p" style="left:18.4px;top:58.7px;font-size:11.0px;line-height:15px;color:#8c8c8c;font-weight:350;transform:scaleX(1.13);transform-origin:0 50%;">파일(F)</div>
<div class="p" style="left:72.9px;top:58.7px;font-size:10.7px;line-height:15px;color:#8c8c8c;font-weight:350;transform:scaleX(1.13);transform-origin:0 50%;">편집(E)</div>
<div class="p" style="left:126.9px;top:58.2px;font-size:11.2px;line-height:16px;color:#8c8c8c;font-weight:350;transform:scaleX(1.13);transform-origin:0 50%;">보기(V)</div>
<div class="p" style="left:182.9px;top:58.2px;font-size:11.4px;line-height:16px;color:#8c8c8c;font-weight:350;transform:scaleX(1.13);transform-origin:0 50%;">즐겨찾기(A)</div>
<div class="p" style="left:263.4px;top:58.7px;font-size:10.8px;line-height:15px;color:#8c8c8c;font-weight:350;transform:scaleX(1.13);transform-origin:0 50%;">도구(T)</div>
<div class="p" style="left:316.9px;top:58.2px;font-size:11.5px;line-height:16px;color:#8c8c8c;font-weight:350;transform:scaleX(1.13);transform-origin:0 50%;">도움말(H)</div>
<div class="p" style="left:9px;top:57px;width:1px;height:46px;background:repeating-linear-gradient(180deg,#b9bdc0 0 1px,transparent 1px 3px)"></div>
<svg class="p" style="left:14px;top:82px;" width="18" height="17" viewBox="0 0 18 17"><polygon points="8,1 10.200,6 15.500,6.500 11.500,10 12.800,15.300 8,12.500 3.200,15.300 4.500,10 .5,6.500 5.800,6" fill="#ffd84a" stroke="#c99a1a" stroke-width="1"/><path d="M9 11 H13.500 V9 L17.500 12.500 L13.500 16 V14 H9Z" fill="#3db54a" stroke="#1d7a2a" stroke-width=".7"/></svg>
<svg class="p" style="left:39px;top:83px;" width="16" height="16" viewBox="0 0 16 16"><path d="M3.500 .5 H11 L15.500 5 V15.500 H3.500Z" fill="#fff" stroke="#8c9196" stroke-width="1"/><path d="M11 .5 V5 H15.500" fill="none" stroke="#8c9196" stroke-width="1"/><text x="6.400" y="14.200" text-anchor="middle" font-family="'Liberation Sans',sans-serif" font-weight="bold" font-size="19" fill="#3fa6ea" stroke="#2a86d4" stroke-width=".3">e</text><path d="M3 14 Q-.5 14.500 .5 10.800 Q2 6.200 7.500 4.200 Q11.800 3 12 5.600 Q12 6.400 11.600 7.200" fill="none" stroke="#f6b414" stroke-width="1.150" stroke-linecap="round"/></svg>
<div class="p" style="left:59.4px;top:83.8px;font-size:11.8px;line-height:17px;color:#000;font-weight:350;transform:scaleX(1.13);transform-origin:0 50%;font-weight:400;">피3</div>
<svg class="p" style="left:85px;top:83px;" width="16" height="16" viewBox="0 0 16 16"><path d="M3.500 .5 H11 L15.500 5 V15.500 H3.500Z" fill="#fff" stroke="#8c9196" stroke-width="1"/><path d="M11 .5 V5 H15.500" fill="none" stroke="#8c9196" stroke-width="1"/><text x="6.400" y="14.200" text-anchor="middle" font-family="'Liberation Sans',sans-serif" font-weight="bold" font-size="19" fill="#3fa6ea" stroke="#2a86d4" stroke-width=".3">e</text><path d="M3 14 Q-.5 14.500 .5 10.800 Q2 6.200 7.500 4.200 Q11.800 3 12 5.600 Q12 6.400 11.600 7.200" fill="none" stroke="#f6b414" stroke-width="1.150" stroke-linecap="round"/></svg>
<div class="p" style="left:106.4px;top:84.3px;font-size:11.6px;line-height:16px;color:#000;font-weight:350;transform:scaleX(1.13);transform-origin:0 50%;font-weight:400;">로사</div>
<svg class="p" style="left:138px;top:83px;" width="16" height="16" viewBox="0 0 16 16"><path d="M3.500 .5 H11 L15.500 5 V15.500 H3.500Z" fill="#fff" stroke="#8c9196" stroke-width="1"/><path d="M11 .5 V5 H15.500" fill="none" stroke="#8c9196" stroke-width="1"/><text x="6.400" y="14.200" text-anchor="middle" font-family="'Liberation Sans',sans-serif" font-weight="bold" font-size="19" fill="#3fa6ea" stroke="#2a86d4" stroke-width=".3">e</text><path d="M3 14 Q-.5 14.500 .5 10.800 Q2 6.200 7.500 4.200 Q11.800 3 12 5.600 Q12 6.400 11.600 7.200" fill="none" stroke="#f6b414" stroke-width="1.150" stroke-linecap="round"/></svg>
<div class="p" style="left:158.4px;top:84.8px;font-size:10.7px;line-height:15px;color:#000;font-weight:350;transform:scaleX(1.13);transform-origin:0 50%;font-weight:400;">X허</div>
<svg class="p" style="left:184px;top:83px;" width="16" height="16" viewBox="0 0 16 16"><path d="M3.500 .5 H11 L15.500 5 V15.500 H3.500Z" fill="#fff" stroke="#8c9196" stroke-width="1"/><path d="M11 .5 V5 H15.500" fill="none" stroke="#8c9196" stroke-width="1"/><text x="6.400" y="14.200" text-anchor="middle" font-family="'Liberation Sans',sans-serif" font-weight="bold" font-size="19" fill="#3fa6ea" stroke="#2a86d4" stroke-width=".3">e</text><path d="M3 14 Q-.5 14.500 .5 10.800 Q2 6.200 7.500 4.200 Q11.800 3 12 5.600 Q12 6.400 11.600 7.200" fill="none" stroke="#f6b414" stroke-width="1.150" stroke-linecap="round"/></svg>
<div class="p" style="left:204.2px;top:83.8px;font-size:12px;line-height:17px;color:#111;letter-spacing:0.51px;">s1</div>
<svg class="p" style="left:224px;top:83px;" width="16" height="16" viewBox="0 0 16 16"><path d="M3.500 .5 H11 L15.500 5 V15.500 H3.500Z" fill="#fff" stroke="#8c9196" stroke-width="1"/><path d="M11 .5 V5 H15.500" fill="none" stroke="#8c9196" stroke-width="1"/><text x="6.400" y="14.200" text-anchor="middle" font-family="'Liberation Sans',sans-serif" font-weight="bold" font-size="19" fill="#3fa6ea" stroke="#2a86d4" stroke-width=".3">e</text><path d="M3 14 Q-.5 14.500 .5 10.800 Q2 6.200 7.500 4.200 Q11.800 3 12 5.600 Q12 6.400 11.600 7.200" fill="none" stroke="#f6b414" stroke-width="1.150" stroke-linecap="round"/></svg>
<div class="p" style="left:245.2px;top:83.8px;font-size:12px;line-height:17px;color:#111;letter-spacing:0.26px;">s2</div>
<svg class="p" style="left:265px;top:83px;" width="16" height="16" viewBox="0 0 16 16"><path d="M3.500 .5 H11 L15.500 5 V15.500 H3.500Z" fill="#fff" stroke="#8c9196" stroke-width="1"/><path d="M11 .5 V5 H15.500" fill="none" stroke="#8c9196" stroke-width="1"/><text x="6.400" y="14.200" text-anchor="middle" font-family="'Liberation Sans',sans-serif" font-weight="bold" font-size="19" fill="#3fa6ea" stroke="#2a86d4" stroke-width=".3">e</text><path d="M3 14 Q-.5 14.500 .5 10.800 Q2 6.200 7.500 4.200 Q11.800 3 12 5.600 Q12 6.400 11.600 7.200" fill="none" stroke="#f6b414" stroke-width="1.150" stroke-linecap="round"/></svg>
<div class="p" style="left:286.4px;top:84.3px;font-size:11.4px;line-height:16px;color:#000;font-weight:350;transform:scaleX(1.13);transform-origin:0 50%;font-weight:400;">피u4</div>
<svg class="p" style="left:319px;top:83px;" width="16" height="16" viewBox="0 0 16 16"><path d="M3.500 .5 H11 L15.500 5 V15.500 H3.500Z" fill="#fff" stroke="#8c9196" stroke-width="1"/><path d="M11 .5 V5 H15.500" fill="none" stroke="#8c9196" stroke-width="1"/><text x="6.400" y="14.200" text-anchor="middle" font-family="'Liberation Sans',sans-serif" font-weight="bold" font-size="19" fill="#3fa6ea" stroke="#2a86d4" stroke-width=".3">e</text><path d="M3 14 Q-.5 14.500 .5 10.800 Q2 6.200 7.500 4.200 Q11.800 3 12 5.600 Q12 6.400 11.600 7.200" fill="none" stroke="#f6b414" stroke-width="1.150" stroke-linecap="round"/></svg>
<div class="p" style="left:340.2px;top:83.8px;font-size:12px;line-height:17px;color:#111;letter-spacing:0.43px;">u4</div>
<svg class="p" style="left:361px;top:86px;" width="16" height="9" viewBox="0 0 16 9"><rect width="16" height="9" fill="#b8242c"/><path d="M2 4.500 H14" stroke="#e8a0a4" stroke-width="1" stroke-dasharray="1 1"/></svg>
<div class="p" style="left:382.4px;top:84.8px;font-size:10.8px;line-height:15px;color:#000;font-weight:350;transform:scaleX(1.13);transform-origin:0 50%;font-weight:400;">친</div>
<svg class="p" style="left:401px;top:83px;" width="16" height="16" viewBox="0 0 16 16"><rect width="16" height="16" fill="#03c73c"/><polygon points="8.00,2.90 9.35,6.64 13.33,6.77 10.19,9.21 11.29,13.03 8.00,10.80 4.71,13.03 5.81,9.21 2.67,6.77 6.65,6.64" fill="#fff"/></svg>
<div class="p" style="left:422.4px;top:84.8px;font-size:10.8px;line-height:15px;color:#000;font-weight:350;transform:scaleX(1.13);transform-origin:0 50%;font-weight:400;">북</div>
<svg class="p" style="left:441px;top:83px;" width="16" height="16" viewBox="0 0 16 16"><rect width="16" height="16" fill="#03c73c"/><path d="M2.800 7.600 H11 Q11.200 13.800 6.900 13.800 Q2.600 13.800 2.800 7.600Z" fill="#fff"/><path d="M11 8.600 Q13.600 8.200 13.400 9.800 Q13.200 11.200 10.600 11.600" fill="none" stroke="#fff" stroke-width="1"/><ellipse cx="8.200" cy="4.600" rx="2.600" ry="1.300" transform="rotate(-24 8.200 4.600)" fill="#fff"/></svg>
<div class="p" style="left:462.4px;top:84.8px;font-size:10.8px;line-height:15px;color:#000;font-weight:350;transform:scaleX(1.13);transform-origin:0 50%;font-weight:400;">멱</div>
<svg class="p" style="left:481px;top:83px;" width="16" height="16" viewBox="0 0 16 16"><rect width="16" height="16" fill="#03c73c"/><path d="M2.800 7.600 H11 Q11.200 13.800 6.900 13.800 Q2.600 13.800 2.800 7.600Z" fill="#fff"/><path d="M11 8.600 Q13.600 8.200 13.400 9.800 Q13.200 11.200 10.600 11.600" fill="none" stroke="#fff" stroke-width="1"/><ellipse cx="8.200" cy="4.600" rx="2.600" ry="1.300" transform="rotate(-24 8.200 4.600)" fill="#fff"/></svg>
<div class="p" style="left:502.4px;top:84.8px;font-size:10.8px;line-height:15px;color:#000;font-weight:350;transform:scaleX(1.13);transform-origin:0 50%;font-weight:400;">중</div>
<svg class="p" style="left:521px;top:83px;" width="16" height="16" viewBox="0 0 16 16"><rect width="16" height="16" fill="#03c73c"/><path d="M2.800 7.600 H11 Q11.200 13.800 6.900 13.800 Q2.600 13.800 2.800 7.600Z" fill="#fff"/><path d="M11 8.600 Q13.600 8.200 13.400 9.800 Q13.200 11.200 10.600 11.600" fill="none" stroke="#fff" stroke-width="1"/><ellipse cx="8.200" cy="4.600" rx="2.600" ry="1.300" transform="rotate(-24 8.200 4.600)" fill="#fff"/></svg>
<div class="p" style="left:542.4px;top:84.8px;font-size:10.8px;line-height:15px;color:#000;font-weight:350;transform:scaleX(1.13);transform-origin:0 50%;font-weight:400;">시</div>
<svg class="p" style="left:561px;top:83px;" width="16" height="16" viewBox="0 0 16 16"><rect width="16" height="16" fill="#03c73c"/><path d="M2.800 7.600 H11 Q11.200 13.800 6.900 13.800 Q2.600 13.800 2.800 7.600Z" fill="#fff"/><path d="M11 8.600 Q13.600 8.200 13.400 9.800 Q13.200 11.200 10.600 11.600" fill="none" stroke="#fff" stroke-width="1"/><ellipse cx="8.200" cy="4.600" rx="2.600" ry="1.300" transform="rotate(-24 8.200 4.600)" fill="#fff"/></svg>
<div class="p" style="left:582.4px;top:84.8px;font-size:10.8px;line-height:15px;color:#000;font-weight:350;transform:scaleX(1.13);transform-origin:0 50%;font-weight:400;">여</div>
<svg class="p" style="left:601px;top:83px;" width="16" height="16" viewBox="0 0 16 16"><rect width="16" height="16" rx="1" fill="#03c73c"/><text x="8" y="12.500" text-anchor="middle" font-family="'Liberation Sans',sans-serif" font-weight="bold" font-size="12.500" fill="#fff" stroke="#fff" stroke-width=".5">N</text></svg>
<div class="p" style="left:622.4px;top:84.8px;font-size:10.8px;line-height:15px;color:#000;font-weight:350;transform:scaleX(1.13);transform-origin:0 50%;font-weight:400;">네</div>
<svg class="p" style="left:641px;top:83px;" width="16" height="16" viewBox="0 0 16 16"><rect width="16" height="16" fill="#03c73c"/><path d="M2.800 7.600 H11 Q11.200 13.800 6.900 13.800 Q2.600 13.800 2.800 7.600Z" fill="#fff"/><path d="M11 8.600 Q13.600 8.200 13.400 9.800 Q13.200 11.200 10.600 11.600" fill="none" stroke="#fff" stroke-width="1"/><ellipse cx="8.200" cy="4.600" rx="2.600" ry="1.300" transform="rotate(-24 8.200 4.600)" fill="#fff"/></svg>
<div class="p" style="left:662.4px;top:84.8px;font-size:10.8px;line-height:15px;color:#000;font-weight:350;transform:scaleX(1.13);transform-origin:0 50%;font-weight:400;">피</div>
<svg class="p" style="left:681px;top:83px;" width="16" height="16" viewBox="0 0 16 16"><rect width="16" height="16" rx="1" fill="#03c73c"/><rect x="2" y="3.500" width="12" height="7" rx="1.500" fill="#fff"/><path d="M6 10 L8 13 L10 10Z" fill="#fff"/><text x="8" y="9" text-anchor="middle" font-family="'Liberation Sans',sans-serif" font-size="5" font-weight="bold" fill="#f08a24">blog</text></svg>
<div class="p" style="left:703.4px;top:84.8px;font-size:10.8px;line-height:15px;color:#000;font-weight:350;transform:scaleX(1.13);transform-origin:0 50%;font-weight:400;">블</div>
<svg class="p" style="left:721px;top:83px;" width="16" height="16" viewBox="0 0 16 16"><path d="M3.500 .5 H11 L15.500 5 V15.500 H3.500Z" fill="#fff" stroke="#8c9196" stroke-width="1"/><path d="M11 .5 V5 H15.500" fill="none" stroke="#8c9196" stroke-width="1"/><text x="6.400" y="14.200" text-anchor="middle" font-family="'Liberation Sans',sans-serif" font-weight="bold" font-size="19" fill="#3fa6ea" stroke="#2a86d4" stroke-width=".3">e</text><path d="M3 14 Q-.5 14.500 .5 10.800 Q2 6.200 7.500 4.200 Q11.800 3 12 5.600 Q12 6.400 11.600 7.200" fill="none" stroke="#f6b414" stroke-width="1.150" stroke-linecap="round"/></svg>
<div class="p" style="left:741.4px;top:83.8px;font-size:11.9px;line-height:17px;color:#000;font-weight:350;transform:scaleX(1.13);transform-origin:0 50%;font-weight:400;">자의</div>
<svg class="p" style="left:772px;top:83px;" width="16" height="16" viewBox="0 0 16 16"><path d="M3.500 .5 H11 L15.500 5 V15.500 H3.500Z" fill="#fff" stroke="#8c9196" stroke-width="1"/><path d="M11 .5 V5 H15.500" fill="none" stroke="#8c9196" stroke-width="1"/><text x="6.400" y="14.200" text-anchor="middle" font-family="'Liberation Sans',sans-serif" font-weight="bold" font-size="19" fill="#3fa6ea" stroke="#2a86d4" stroke-width=".3">e</text><path d="M3 14 Q-.5 14.500 .5 10.800 Q2 6.200 7.500 4.200 Q11.800 3 12 5.600 Q12 6.400 11.600 7.200" fill="none" stroke="#f6b414" stroke-width="1.150" stroke-linecap="round"/></svg>
<div class="p" style="left:793.2px;top:83.8px;font-size:12px;line-height:17px;color:#111;letter-spacing:2.20px;">M</div>
<svg class="p" style="left:812px;top:83px;" width="16" height="16" viewBox="0 0 16 16"><rect width="16" height="16" fill="#03c73c"/><path d="M2.800 7.600 H11 Q11.200 13.800 6.900 13.800 Q2.600 13.800 2.800 7.600Z" fill="#fff"/><path d="M11 8.600 Q13.600 8.200 13.400 9.800 Q13.200 11.200 10.600 11.600" fill="none" stroke="#fff" stroke-width="1"/><ellipse cx="8.200" cy="4.600" rx="2.600" ry="1.300" transform="rotate(-24 8.200 4.600)" fill="#fff"/></svg>
<div class="p" style="left:833.4px;top:84.8px;font-size:10.8px;line-height:15px;color:#000;font-weight:350;transform:scaleX(1.13);transform-origin:0 50%;font-weight:400;">청</div>
<svg class="p" style="left:852px;top:83px;" width="16" height="16" viewBox="0 0 16 16"><rect width="16" height="16" fill="#03c73c"/><path d="M2.800 7.600 H11 Q11.200 13.800 6.900 13.800 Q2.600 13.800 2.800 7.600Z" fill="#fff"/><path d="M11 8.600 Q13.600 8.200 13.400 9.800 Q13.200 11.200 10.600 11.600" fill="none" stroke="#fff" stroke-width="1"/><ellipse cx="8.200" cy="4.600" rx="2.600" ry="1.300" transform="rotate(-24 8.200 4.600)" fill="#fff"/></svg>
<div class="p" style="left:873.2px;top:83.8px;font-size:12px;line-height:17px;color:#111;letter-spacing:0.18px;">29</div>
<svg class="p" style="left:893px;top:83px;" width="16" height="16" viewBox="0 0 16 16"><path d="M3.500 .5 H11 L15.500 5 V15.500 H3.500Z" fill="#fff" stroke="#8c9196" stroke-width="1"/><path d="M11 .5 V5 H15.500" fill="none" stroke="#8c9196" stroke-width="1"/><text x="6.400" y="14.200" text-anchor="middle" font-family="'Liberation Sans',sans-serif" font-weight="bold" font-size="19" fill="#3fa6ea" stroke="#2a86d4" stroke-width=".3">e</text><path d="M3 14 Q-.5 14.500 .5 10.800 Q2 6.200 7.500 4.200 Q11.800 3 12 5.600 Q12 6.400 11.600 7.200" fill="none" stroke="#f6b414" stroke-width="1.150" stroke-linecap="round"/></svg>
<div class="p" style="left:915.4px;top:84.8px;font-size:10.8px;line-height:15px;color:#000;font-weight:350;transform:scaleX(1.13);transform-origin:0 50%;font-weight:400;">바</div>
<svg class="p" style="left:934px;top:83px;" width="16" height="16" viewBox="0 0 16 16"><rect width="16" height="16" fill="#03c73c"/><path d="M2.800 7.600 H11 Q11.200 13.800 6.900 13.800 Q2.600 13.800 2.800 7.600Z" fill="#fff"/><path d="M11 8.600 Q13.600 8.200 13.400 9.800 Q13.200 11.200 10.600 11.600" fill="none" stroke="#fff" stroke-width="1"/><ellipse cx="8.200" cy="4.600" rx="2.600" ry="1.300" transform="rotate(-24 8.200 4.600)" fill="#fff"/></svg>
<div class="p" style="left:955.4px;top:84.8px;font-size:10.8px;line-height:15px;color:#000;font-weight:350;transform:scaleX(1.13);transform-origin:0 50%;font-weight:400;">버</div>
<svg class="p" style="left:974px;top:83px;" width="16" height="16" viewBox="0 0 16 16"><rect width="16" height="16" fill="#03c73c"/><path d="M2.800 7.600 H11 Q11.200 13.800 6.900 13.800 Q2.600 13.800 2.800 7.600Z" fill="#fff"/><path d="M11 8.600 Q13.600 8.200 13.400 9.800 Q13.200 11.200 10.600 11.600" fill="none" stroke="#fff" stroke-width="1"/><ellipse cx="8.200" cy="4.600" rx="2.600" ry="1.300" transform="rotate(-24 8.200 4.600)" fill="#fff"/></svg>
<div class="p" style="left:995.4px;top:84.8px;font-size:10.8px;line-height:15px;color:#000;font-weight:350;transform:scaleX(1.13);transform-origin:0 50%;font-weight:400;">미</div>
<svg class="p" style="left:1014px;top:83px;" width="16" height="16" viewBox="0 0 16 16"><rect width="16" height="16" fill="#03c73c"/><path d="M2.800 7.600 H11 Q11.200 13.800 6.900 13.800 Q2.600 13.800 2.800 7.600Z" fill="#fff"/><path d="M11 8.600 Q13.600 8.200 13.400 9.800 Q13.200 11.200 10.600 11.600" fill="none" stroke="#fff" stroke-width="1"/><ellipse cx="8.200" cy="4.600" rx="2.600" ry="1.300" transform="rotate(-24 8.200 4.600)" fill="#fff"/></svg>
<div class="p" style="left:1035.4px;top:84.8px;font-size:10.8px;line-height:15px;color:#000;font-weight:350;transform:scaleX(1.13);transform-origin:0 50%;font-weight:400;">출</div>
<svg class="p" style="left:1055px;top:83px;" width="16" height="16" viewBox="0 0 16 16"><path d="M1 4 L8 1 L15 4 V14 Q15 15 14 15 H2 Q1 15 1 14Z" fill="#03c73c"/><path d="M3.500 6 H12.500 V11.500 H3.500Z" fill="#fff"/><path d="M5 7.500 L8 10 L11 7.500" fill="none" stroke="#03c73c" stroke-width="1.400"/></svg>
<div class="p" style="left:1075.4px;top:84.3px;font-size:11.2px;line-height:16px;color:#000;font-weight:350;transform:scaleX(1.13);transform-origin:0 50%;font-weight:400;">네메</div>
<svg class="p" style="left:1106px;top:83px;" width="16" height="16" viewBox="0 0 16 16"><rect x="2" y="2" width="12" height="11" rx="2" fill="#fff" stroke="#3f9be0" stroke-width="1.300"/><path d="M.8 5 V8 M15.200 5 V8 M2 8.500 H14 M4.500 13 V15 M11.500 13 V15" stroke="#3f9be0" stroke-width="1.300"/></svg>
<div class="p" style="left:1127.4px;top:84.8px;font-size:10.8px;line-height:15px;color:#000;font-weight:350;transform:scaleX(1.13);transform-origin:0 50%;font-weight:400;">고</div>
<svg class="p" style="left:1145px;top:83px;" width="16" height="16" viewBox="0 0 16 16"><path d="M3.500 .5 H11 L15.500 5 V15.500 H3.500Z" fill="#fff" stroke="#8c9196" stroke-width="1"/><path d="M11 .5 V5 H15.500" fill="none" stroke="#8c9196" stroke-width="1"/><text x="6.400" y="14.200" text-anchor="middle" font-family="'Liberation Sans',sans-serif" font-weight="bold" font-size="19" fill="#3fa6ea" stroke="#2a86d4" stroke-width=".3">e</text><path d="M3 14 Q-.5 14.500 .5 10.800 Q2 6.200 7.500 4.200 Q11.800 3 12 5.600 Q12 6.400 11.600 7.200" fill="none" stroke="#f6b414" stroke-width="1.150" stroke-linecap="round"/></svg>
<div class="p" style="left:1166.4px;top:84.3px;font-size:11.6px;line-height:16px;color:#000;font-weight:350;transform:scaleX(1.13);transform-origin:0 50%;font-weight:400;">중미</div>
<svg class="p" style="left:1198px;top:84px;" width="16" height="14" viewBox="0 0 16 14"><path d="M1 1 H12 L15 5 L10 12 L6 8 L2 11 Z" fill="none" stroke="#2a5bd8" stroke-width="1.600" stroke-dasharray="1.600 1.600"/><rect x="3" y="12" width="2" height="2" fill="#e88a2a"/></svg>
<div class="p" style="left:1219.2px;top:83.8px;font-size:12px;line-height:17px;color:#111;letter-spacing:-0.30px;">P</div>
<svg class="p" style="left:1233px;top:83px;" width="16" height="16" viewBox="0 0 16 16"><rect width="16" height="16" rx="1" fill="#03c73c"/><text x="8" y="12.500" text-anchor="middle" font-family="'Liberation Sans',sans-serif" font-weight="bold" font-size="12.500" fill="#fff" stroke="#fff" stroke-width=".5">N</text></svg>
<div class="p" style="left:1254.4px;top:84.8px;font-size:10.8px;line-height:15px;color:#000;font-weight:350;transform:scaleX(1.13);transform-origin:0 50%;font-weight:400;">편</div>
<svg class="p" style="left:1272px;top:83px;" width="16" height="16" viewBox="0 0 16 16"><path d="M3.500 .5 H11 L15.500 5 V15.500 H3.500Z" fill="#fff" stroke="#8c9196" stroke-width="1"/><path d="M11 .5 V5 H15.500" fill="none" stroke="#8c9196" stroke-width="1"/><text x="6.400" y="14.200" text-anchor="middle" font-family="'Liberation Sans',sans-serif" font-weight="bold" font-size="19" fill="#3fa6ea" stroke="#2a86d4" stroke-width=".3">e</text><path d="M3 14 Q-.5 14.500 .5 10.800 Q2 6.200 7.500 4.200 Q11.800 3 12 5.600 Q12 6.400 11.600 7.200" fill="none" stroke="#f6b414" stroke-width="1.150" stroke-linecap="round"/></svg>
<div class="p" style="left:1294.4px;top:84.3px;font-size:11.6px;line-height:16px;color:#000;font-weight:350;transform:scaleX(1.13);transform-origin:0 50%;font-weight:400;">명가</div>
<div class="p" style="left:1247px;top:62px;width:119px;height:26px;background:linear-gradient(180deg,#8d9090 0,#6c7070 42%,#4d5353 50%,#565c5c 100%);border-top:1px solid #9a9a9a;border-left:1px solid #7d8080"></div>
<div class="p" style="left:1250.5px;top:66.5px;width:10.2px;height:20px;background-image:radial-gradient(circle at 1.200px 1.200px,#1c1f1f 0,#1c1f1f .95px,transparent 1.250px),radial-gradient(circle at 2px 2px,rgba(220,225,225,.45) 0,rgba(220,225,225,.45) .8px,transparent 1.100px);background-size:3.400px 4px"></div>
<svg class="p" style="left:1266px;top:66px;" width="17" height="18" viewBox="0 0 17 18"><circle cx="7.500" cy="8" r="6.500" fill="#4aa0e0"/><path d="M3 5 Q6 2 9 4 Q8 7 5 8 Q3 8 3 5Z M8 9 Q11 8 12.500 10 Q11 13 8.500 13Z" fill="#5fbf4a"/><path d="M8 14 L14.500 6 L16.500 7.800 L10 15.800 L7.600 16.400Z" fill="#f2d04a" stroke="#8a6a1a" stroke-width=".6"/><path d="M14.500 6 L16.500 7.800" stroke="#e05a6a" stroke-width="2"/></svg>
<div class="p" style="left:1284px;top:64px;width:20px;height:23px;border:1px solid #8a8d8d;border-radius:2px;background:linear-gradient(180deg,#767a7a 0,#5c6060 48%,#424747 52%,#4a5050 100%)"></div>
<div class="p" style="left:1304px;top:64px;width:20px;height:23px;border:1px solid #8a8d8d;border-radius:2px;background:linear-gradient(180deg,#767a7a 0,#5c6060 48%,#424747 52%,#4a5050 100%)"></div>
<div class="p" style="left:1286.3px;top:61.9px;font-size:20px;line-height:28px;color:#fff;transform:scaleX(1.14);transform-origin:0 50%;">A</div>
<div class="p" style="left:1304.9px;top:64.7px;font-size:16.1px;line-height:23px;color:#fff;font-weight:350;transform:scaleX(1.13);transform-origin:0 50%;font-family:'Liberation Sans','Noto Sans CJK KR',sans-serif;">漢</div>
<div class="p" style="left:1328px;top:68px;width:16px;height:16px;border-radius:50%;background:radial-gradient(circle at 40% 30%,#5a7cf0,#1228b4 70%);border:1px solid #c9d2f5"></div>
<div class="p" style="left:1332.4px;top:68.2px;font-size:11.8px;line-height:17px;color:#fff;font-weight:bold;">?</div>
<div class="p" style="left:1354px;top:68px;width:6px;height:2px;background:#fff"></div>
<svg class="p" style="left:1353px;top:76px;" width="8" height="5" viewBox="0 0 8 5"><path d="M0 0 H7 L3.500 4Z" fill="#fff"/></svg>
<!-- ===== TASKBAR ===== -->
<div class="p" style="left:0px;top:708px;width:1366px;height:60px;background:linear-gradient(90deg,#2f86ae 0,#2e7fa9 12%,#2b74a2 30%,#276a9a 45%,#225c8f 58%,#1d4f84 70%,#194578 82%,#153b6c 92%,#143867 100%);overflow:hidden;border-top:1px solid #1b252d"><div class="p" style="left:940px;top:-40px;width:60px;height:160px;background:linear-gradient(90deg,transparent,rgba(160,210,240,.22),transparent);transform:rotate(-48deg)"></div><div class="p" style="left:360px;top:-40px;width:50px;height:160px;background:linear-gradient(90deg,transparent,rgba(160,220,240,.12),transparent);transform:rotate(-48deg)"></div><div class="p" style="left:120px;top:-40px;width:50px;height:160px;background:linear-gradient(90deg,transparent,rgba(170,225,240,.16),transparent);transform:rotate(-48deg)"></div><div class="p" style="left:0;top:1px;width:1366px;height:15px;background:linear-gradient(180deg,rgba(20,28,48,.62) 0,rgba(20,28,48,.4) 4px,rgba(20,28,48,0) 15px)"></div></div>
<div class="p" style="left:0px;top:709px;width:1366px;height:1px;background:rgba(200,225,240,.45)"></div>
<div class="p" style="left:8px;top:718.5px;width:38px;height:38px;border-radius:50%;background:radial-gradient(circle at 50% 100%,#9fe6fa 0,#4fb4e0 22%,#2578b8 48%,#1d5a9c 70%,#234a80 100%);border:1px solid #9fd0e8;box-shadow:0 0 0 1px rgba(10,30,60,.75),0 0 4px 1px rgba(10,40,70,.5)"></div>
<div class="p" style="left:11px;top:720.5px;width:32px;height:15px;border-radius:16px 16px 40% 40%/15px 15px 6px 6px;background:linear-gradient(180deg,rgba(255,255,255,.45),rgba(255,255,255,.08))"></div>
<svg class="p" style="left:13.5px;top:724.5px;" width="27" height="26" viewBox="-1.500 1 22 21"><path d="M2.500 4.500 Q6 2 9.800 4 L8.600 9.800 Q5 8 1.300 10.300Z" fill="#f0642a"/><path d="M11.300 4.600 Q15 6.500 19.500 4.300 L18.200 10 Q14 12 10.100 10.300Z" fill="#8cc83c"/><path d="M1 11.800 Q4.800 9.500 8.300 11.300 L7.100 17 Q3.500 15 -.2 17.500Z" fill="#3aa0e8"/><path d="M9.800 11.800 Q13.500 13.500 17.800 11.500 L16.600 17.300 Q12.500 19 8.600 17.500Z" fill="#f8c828"/></svg>
<div class="p" style="left:57px;top:712px;width:10.2px;height:24px;background-image:radial-gradient(circle at 1.200px 1.200px,#0b1c2c 0,#0b1c2c .95px,transparent 1.250px),radial-gradient(circle at 2px 2px,rgba(200,228,240,.5) 0,rgba(200,228,240,.5) .8px,transparent 1.100px);background-size:3.400px 4px"></div>
<div class="p" style="left:57px;top:742px;width:10.2px;height:24px;background-image:radial-gradient(circle at 1.200px 1.200px,#0b1c2c 0,#0b1c2c .95px,transparent 1.250px),radial-gradient(circle at 2px 2px,rgba(200,228,240,.5) 0,rgba(200,228,240,.5) .8px,transparent 1.100px);background-size:3.400px 4px"></div>
<div class="p" style="left:1160px;top:742px;width:10.2px;height:24px;background-image:radial-gradient(circle at 1.200px 1.200px,#0b1c2c 0,#0b1c2c .95px,transparent 1.250px),radial-gradient(circle at 2px 2px,rgba(200,228,240,.5) 0,rgba(200,228,240,.5) .8px,transparent 1.100px);background-size:3.400px 4px"></div>
<div class="p" style="left:75.5px;top:708.5px;width:190px;height:28.5px;border:1px solid #13222f;border-radius:3px;background:linear-gradient(180deg,rgba(255,255,255,.34) 0,rgba(255,255,255,.2) 45%,rgba(255,255,255,.08) 50%,rgba(255,255,255,.14) 100%);box-shadow:inset 0 0 0 1px rgba(255,255,255,.38)"></div>
<div class="p" style="left:139.3px;top:710.5px;width:2px;height:25px;background:linear-gradient(90deg,rgba(20,40,60,.35) 0 1px,rgba(255,255,255,.25) 1px 2px)"></div>
<div class="p" style="left:202.7px;top:710.5px;width:2px;height:25px;background:linear-gradient(90deg,rgba(20,40,60,.35) 0 1px,rgba(255,255,255,.25) 1px 2px)"></div>
<svg class="p" style="left:80.5px;top:715px;" width="17" height="17" viewBox="0 0 16 16"><text x="8.600" y="15.300" transform="translate(8.400 0) scale(1.130 1) translate(-8.400 0)" text-anchor="middle" font-family="'Liberation Sans',sans-serif" font-weight="bold" font-size="26" fill="#3fa6ea" stroke="#2a86d4" stroke-width=".35">e</text><path d="M4.200 15.300 Q-.6 16 .7 10.800 Q2.800 3.800 9.800 1.200 Q15.400 -.5 15.900 3 Q16 4.300 15.300 5.600" fill="none" stroke="#f6b414" stroke-width="1.350" stroke-linecap="round"/></svg>
<div class="p" style="left:99.9px;top:716.9px;font-size:11.5px;line-height:16px;color:#fff;font-weight:350;transform:scaleX(1.13);transform-origin:0 50%;">공...</div>
<svg class="p" style="left:144.5px;top:715px;" width="17" height="17" viewBox="0 0 16 16"><text x="8.600" y="15.300" transform="translate(8.400 0) scale(1.130 1) translate(-8.400 0)" text-anchor="middle" font-family="'Liberation Sans',sans-serif" font-weight="bold" font-size="26" fill="#3fa6ea" stroke="#2a86d4" stroke-width=".35">e</text><path d="M4.200 15.300 Q-.6 16 .7 10.800 Q2.800 3.800 9.800 1.200 Q15.400 -.5 15.900 3 Q16 4.300 15.300 5.600" fill="none" stroke="#f6b414" stroke-width="1.350" stroke-linecap="round"/></svg>
<div class="p" style="left:164.9px;top:717.4px;font-size:11.0px;line-height:15px;color:#fff;font-weight:350;transform:scaleX(1.13);transform-origin:0 50%;">새 ...</div>
<svg class="p" style="left:208px;top:715px;" width="17" height="17" viewBox="0 0 16 16"><text x="8.600" y="15.300" transform="translate(8.400 0) scale(1.130 1) translate(-8.400 0)" text-anchor="middle" font-family="'Liberation Sans',sans-serif" font-weight="bold" font-size="26" fill="#3fa6ea" stroke="#2a86d4" stroke-width=".35">e</text><path d="M4.200 15.300 Q-.6 16 .7 10.800 Q2.800 3.800 9.800 1.200 Q15.400 -.5 15.900 3 Q16 4.300 15.300 5.600" fill="none" stroke="#f6b414" stroke-width="1.350" stroke-linecap="round"/></svg>
<div class="p" style="left:228.1px;top:717.4px;font-size:10.7px;line-height:15px;color:#fff;font-weight:350;transform:scaleX(1.13);transform-origin:0 50%;">메...</div>
<div class="p" style="left:269.0px;top:708.5px;width:190.0px;height:28.5px;border:1px solid #13222f;border-radius:3px;background:linear-gradient(180deg,rgba(255,255,255,.34) 0,rgba(255,255,255,.2) 45%,rgba(255,255,255,.08) 50%,rgba(255,255,255,.14) 100%);box-shadow:inset 0 0 0 1px rgba(255,255,255,.38)"></div>
<div class="p" style="left:332.8px;top:710.5px;width:2px;height:25px;background:linear-gradient(90deg,rgba(20,40,60,.35) 0 1px,rgba(255,255,255,.25) 1px 2px)"></div>
<div class="p" style="left:396.2px;top:710.5px;width:2px;height:25px;background:linear-gradient(90deg,rgba(20,40,60,.35) 0 1px,rgba(255,255,255,.25) 1px 2px)"></div>
<svg class="p" style="left:275.0px;top:715.0px;" width="17" height="17" viewBox="0 0 18 18"><circle cx="9" cy="9" r="8" fill="#e8483a"/><path d="M9 9 L2.100 13 A8 8 0 0 0 9.800 17 L13 11.300Z" fill="#2ea44e"/><path d="M9 9 L9.800 17 A8 8 0 0 0 16 5 L9 5Z" fill="#f8c818"/><path d="M9 9 L16 5 A8 8 0 0 0 2.100 5 L5.500 11Z" fill="#e8483a"/><path d="M2.100 5 L5.500 11 L2.100 13 A8 8 0 0 1 2.100 5Z" fill="#2ea44e"/><circle cx="9" cy="9" r="3.800" fill="#fff"/><circle cx="9" cy="9" r="3" fill="#3c84e8"/></svg>
<div class="p" style="left:294.4px;top:717.4px;font-size:10.8px;line-height:15px;color:#fff;font-weight:350;transform:scaleX(1.13);transform-origin:0 50%;">새 ...</div>
<svg class="p" style="left:338.5px;top:715.0px;" width="17" height="17" viewBox="0 0 18 18"><circle cx="9" cy="9" r="8" fill="#e8483a"/><path d="M9 9 L2.100 13 A8 8 0 0 0 9.800 17 L13 11.300Z" fill="#2ea44e"/><path d="M9 9 L9.800 17 A8 8 0 0 0 16 5 L9 5Z" fill="#f8c818"/><path d="M9 9 L16 5 A8 8 0 0 0 2.100 5 L5.500 11Z" fill="#e8483a"/><path d="M2.100 5 L5.500 11 L2.100 13 A8 8 0 0 1 2.100 5Z" fill="#2ea44e"/><circle cx="9" cy="9" r="3.800" fill="#fff"/><circle cx="9" cy="9" r="3" fill="#3c84e8"/></svg>
<div class="p" style="left:358.9px;top:717.4px;font-size:10.7px;line-height:15px;color:#fff;font-weight:350;transform:scaleX(1.13);transform-origin:0 50%;">자...</div>
<svg class="p" style="left:402.0px;top:715.0px;" width="17" height="17" viewBox="0 0 18 18"><circle cx="9" cy="9" r="8" fill="#e8483a"/><path d="M9 9 L2.100 13 A8 8 0 0 0 9.800 17 L13 11.300Z" fill="#2ea44e"/><path d="M9 9 L9.800 17 A8 8 0 0 0 16 5 L9 5Z" fill="#f8c818"/><path d="M9 9 L16 5 A8 8 0 0 0 2.100 5 L5.500 11Z" fill="#e8483a"/><path d="M2.100 5 L5.500 11 L2.100 13 A8 8 0 0 1 2.100 5Z" fill="#2ea44e"/><circle cx="9" cy="9" r="3.800" fill="#fff"/><circle cx="9" cy="9" r="3" fill="#3c84e8"/></svg>
<div class="p" style="left:422.4px;top:715.4px;font-size:13.7px;line-height:19px;color:#fff;transform:scaleX(0.88);transform-origin:0 50%;">uuu...</div>
<div class="p" style="left:463.5px;top:708.5px;width:62px;height:28.5px;border:1px solid #13222f;border-radius:3px;background:linear-gradient(180deg,rgba(255,255,255,.34) 0,rgba(255,255,255,.2) 45%,rgba(255,255,255,.08) 50%,rgba(255,255,255,.14) 100%);box-shadow:inset 0 0 0 1px rgba(255,255,255,.38)"></div>
<svg class="p" style="left:468.5px;top:715.0px;" width="17" height="17" viewBox="0 0 18 18"><circle cx="9" cy="9" r="8.200" fill="#d8a818" stroke="#6a4a08" stroke-width=".8"/><circle cx="9" cy="9" r="6.200" fill="#f2cc3a"/><text x="9" y="12.2" text-anchor="middle" font-family="'Liberation Sans',sans-serif" font-size="8.5" font-weight="bold" fill="#1a1408" font-style="italic">UE</text></svg>
<div class="p" style="left:488.4px;top:715.4px;font-size:13.8px;line-height:19px;color:#fff;transform:scaleX(0.88);transform-origin:0 50%;">[D:...</div>
<div class="p" style="left:538px;top:716px;width:15px;height:15px;background:#9fd0f2;border:1px solid #5aa0d8"></div>
<svg class="p" style="left:540px;top:718px;" width="11" height="11" viewBox="0 0 11 11"><circle cx="5.500" cy="5.500" r="5.300" fill="#f08a18"/><path d="M4 2.800 L8.500 5.500 L4 8.200Z" fill="#fff"/></svg>
<div class="p" style="left:566.0px;top:708.5px;width:190.5px;height:28.5px;border:1px solid #13222f;border-radius:3px;background:linear-gradient(180deg,rgba(255,255,255,.34) 0,rgba(255,255,255,.2) 45%,rgba(255,255,255,.08) 50%,rgba(255,255,255,.14) 100%);box-shadow:inset 0 0 0 1px rgba(255,255,255,.38)"></div>
<div class="p" style="left:630.0px;top:710.5px;width:2px;height:25px;background:linear-gradient(90deg,rgba(20,40,60,.35) 0 1px,rgba(255,255,255,.25) 1px 2px)"></div>
<div class="p" style="left:693.5px;top:710.5px;width:2px;height:25px;background:linear-gradient(90deg,rgba(20,40,60,.35) 0 1px,rgba(255,255,255,.25) 1px 2px)"></div>
<svg class="p" style="left:572px;top:714px;" width="19" height="19" viewBox="0 0 19 19"><circle cx="11" cy="7" r="5.200" fill="#cfe6fa" stroke="#8a99a8" stroke-width="1.300"/><path d="M7.200 11 L1.800 17" stroke="#a08a6a" stroke-width="2.600" stroke-linecap="round"/></svg>
<div class="p" style="left:591.4px;top:715.9px;font-size:12.9px;line-height:18px;color:#fff;transform:scaleX(0.88);transform-origin:0 50%;">*.ba...</div>
<svg class="p" style="left:636.0px;top:714.5px;" width="18" height="18" viewBox="0 0 18 18"><path d="M4 2 L10 1 V17 L4 16Z" fill="#e8c860" stroke="#b89a3a" stroke-width=".6"/><path d="M6 3 L13 2 Q14 2 14 3 V15 Q14 16 13 16 L6 17Z" fill="#f6e08a" stroke="#c2a23e" stroke-width=".6"/><path d="M11 9 V13" stroke="#8aa8d8" stroke-width="1"/></svg>
<svg class="p" style="left:648px;top:723px;" width="7" height="9" viewBox="0 0 7 9"><path d="M2 0 H5 V4 H7 L3.500 8.500 L0 4 H2Z" fill="#2a7ae0" stroke="#fff" stroke-width=".5"/></svg>
<div class="p" style="left:654.9px;top:716.9px;font-size:11.3px;line-height:16px;color:#fff;font-weight:350;transform:scaleX(0.9);transform-origin:0 50%;">C:₩...</div>
<svg class="p" style="left:698.0px;top:714.5px;" width="18" height="18" viewBox="0 0 18 18"><path d="M4 2 L10 1 V17 L4 16Z" fill="#e8c860" stroke="#b89a3a" stroke-width=".6"/><path d="M6 3 L13 2 Q14 2 14 3 V15 Q14 16 13 16 L6 17Z" fill="#f6e08a" stroke="#c2a23e" stroke-width=".6"/><path d="M11 9 V13" stroke="#8aa8d8" stroke-width="1"/></svg>
<div class="p" style="left:719.9px;top:716.4px;font-size:12.1px;line-height:17px;color:#fff;font-weight:350;transform:scaleX(0.9);transform-origin:0 50%;">D:₩...</div>
<svg class="p" style="left:767.8px;top:715.2px;" width="17.5" height="17.5" viewBox="0 0 18 18"><ellipse cx="9" cy="9" rx="7.800" ry="8.400" fill="#e8182c"/><ellipse cx="9" cy="9" rx="3.600" ry="6" fill="#1d5384"/></svg>
<div class="p" style="left:797.0px;top:708.5px;width:190.5px;height:28.5px;border:1px solid #13222f;border-radius:3px;background:linear-gradient(180deg,rgba(255,255,255,.34) 0,rgba(255,255,255,.2) 45%,rgba(255,255,255,.08) 50%,rgba(255,255,255,.14) 100%);box-shadow:inset 0 0 0 1px rgba(255,255,255,.38)"></div>
<div class="p" style="left:861.0px;top:710.5px;width:2px;height:25px;background:linear-gradient(90deg,rgba(20,40,60,.35) 0 1px,rgba(255,255,255,.25) 1px 2px)"></div>
<div class="p" style="left:924.5px;top:710.5px;width:2px;height:25px;background:linear-gradient(90deg,rgba(20,40,60,.35) 0 1px,rgba(255,255,255,.25) 1px 2px)"></div>
<svg class="p" style="left:804.0px;top:715.0px;" width="17" height="17" viewBox="0 0 18 18"><rect x="1" y="1" width="16" height="16" fill="#b0101a"/><text x="9" y="13.5" text-anchor="middle" font-family="'Liberation Sans',sans-serif" font-size="12" font-weight="bold" fill="#fff" font-style="italic">Fz</text></svg>
<div class="p" style="left:822.9px;top:716.4px;font-size:12.4px;line-height:17px;color:#fff;transform:scaleX(0.88);transform-origin:0 50%;">pire...</div>
<svg class="p" style="left:867.5px;top:715.0px;" width="17" height="17" viewBox="0 0 18 18"><rect x="1" y="1" width="16" height="16" fill="#b0101a"/><text x="9" y="13.5" text-anchor="middle" font-family="'Liberation Sans',sans-serif" font-size="12" font-weight="bold" fill="#fff" font-style="italic">Fz</text></svg>
<div class="p" style="left:886.4px;top:715.9px;font-size:12.6px;line-height:18px;color:#fff;transform:scaleX(0.88);transform-origin:0 50%;">pire...</div>
<svg class="p" style="left:931.0px;top:715.0px;" width="17" height="17" viewBox="0 0 18 18"><rect x="1" y="1" width="16" height="16" fill="#b0101a"/><text x="9" y="13.5" text-anchor="middle" font-family="'Liberation Sans',sans-serif" font-size="12" font-weight="bold" fill="#fff" font-style="italic">Fz</text></svg>
<div class="p" style="left:951.4px;top:717.9px;font-size:9.9px;line-height:14px;color:#fff;font-weight:350;transform:scaleX(1.13);transform-origin:0 50%;">김...</div>
<div class="p" style="left:990.5px;top:708.5px;width:62px;height:28.5px;border:1px solid #13222f;border-radius:3px;background:linear-gradient(180deg,rgba(255,255,255,.34) 0,rgba(255,255,255,.2) 45%,rgba(255,255,255,.08) 50%,rgba(255,255,255,.14) 100%);box-shadow:inset 0 0 0 1px rgba(255,255,255,.38)"></div>
<svg class="p" style="left:996.0px;top:715.0px;" width="17" height="17" viewBox="0 0 18 18"><rect x="1" y="1" width="16" height="16" rx="1" fill="#fae100"/><ellipse cx="9" cy="8.500" rx="5.800" ry="4.600" fill="#4a2a22"/><path d="M6 12 L5.500 15 L9 12.500Z" fill="#4a2a22"/></svg>
<div class="p" style="left:1015.4px;top:717.4px;font-size:10.7px;line-height:15px;color:#fff;font-weight:350;transform:scaleX(1.13);transform-origin:0 50%;">카...</div>
<div class="p" style="left:1056.5px;top:708.5px;width:61px;height:28.5px;border:1px solid #13222f;border-radius:3px;background:linear-gradient(180deg,rgba(255,255,255,.34) 0,rgba(255,255,255,.2) 45%,rgba(255,255,255,.08) 50%,rgba(255,255,255,.14) 100%);box-shadow:inset 0 0 0 1px rgba(255,255,255,.38)"></div>
<svg class="p" style="left:1060.0px;top:712.5px;" width="21" height="21" viewBox="0 0 18 18"><path d="M3.500 3 H14 L13.500 16 H3Z" fill="#e4f0fa" stroke="#5a88b8" stroke-width=".8"/><path d="M5 6 H13" stroke="#7aa0c8" stroke-width=".7"/><path d="M5 8 H13" stroke="#7aa0c8" stroke-width=".7"/><path d="M5 10 H13" stroke="#7aa0c8" stroke-width=".7"/><path d="M5 12 H13" stroke="#7aa0c8" stroke-width=".7"/><path d="M5 14 H13" stroke="#7aa0c8" stroke-width=".7"/><path d="M4 2.500 H14" stroke="#3a5a88" stroke-width="1.400" stroke-dasharray="1 1"/></svg>
<div class="p" style="left:1081.4px;top:717.4px;font-size:11.0px;line-height:15px;color:#fff;font-weight:350;transform:scaleX(1.13);transform-origin:0 50%;">제...</div>
<div class="p" style="left:1121.0px;top:708.5px;width:61.5px;height:28.5px;border:1px solid #13222f;border-radius:3px;background:linear-gradient(180deg,rgba(255,255,255,.34) 0,rgba(255,255,255,.2) 45%,rgba(255,255,255,.08) 50%,rgba(255,255,255,.14) 100%);box-shadow:inset 0 0 0 1px rgba(255,255,255,.38)"></div>
<svg class="p" style="left:1126.0px;top:714.5px;" width="18" height="18" viewBox="0 0 18 18"><ellipse cx="9" cy="11" rx="5.500" ry="5.500" fill="#f4f0e6" stroke="#8a7a5a" stroke-width=".6"/><circle cx="6.500" cy="5.500" r="3.200" fill="#fff" stroke="#5a4a3a" stroke-width=".6"/><circle cx="11.500" cy="5.500" r="3.200" fill="#fff" stroke="#5a4a3a" stroke-width=".6"/><circle cx="7" cy="5.800" r="1.200" fill="#111"/><circle cx="11.800" cy="5.800" r="1.600" fill="#e8481a"/><path d="M4 16 H7.500 M10.500 16 H14" stroke="#e88a1a" stroke-width="2"/></svg>
<div class="p" style="left:1146.9px;top:717.4px;font-size:10.4px;line-height:15px;color:#fff;font-weight:350;transform:scaleX(1.13);transform-origin:0 50%;">알...</div>
<svg class="p" style="left:74.0px;top:743.5px;" width="18" height="18" viewBox="0 0 18 18"><path d="M2 5 H7 L8.500 6.500 H16 V15 H2Z" fill="#f4d878" stroke="#b89a3a" stroke-width=".6"/><rect x="4.500" y="10" width="9" height="6" fill="#5ab0f0" stroke="#2a6ab0" stroke-width=".6"/><rect x="3" y="3" width="12" height="5" fill="#fbf4d0" stroke="#c8b060" stroke-width=".5"/></svg>
<svg class="p" style="left:97.0px;top:743.5px;" width="18" height="18" viewBox="0 0 18 18"><path d="M4 2 L10 1 V17 L4 16Z" fill="#e8c860" stroke="#b89a3a" stroke-width=".6"/><path d="M6 3 L13 2 Q14 2 14 3 V15 Q14 16 13 16 L6 17Z" fill="#f6e08a" stroke="#c2a23e" stroke-width=".6"/><path d="M11 9 V13" stroke="#8aa8d8" stroke-width="1"/></svg>
<svg class="p" style="left:120.0px;top:743.5px;" width="18" height="18" viewBox="0 0 18 18"><path d="M4 2 L10 1 V17 L4 16Z" fill="#e8c860" stroke="#b89a3a" stroke-width=".6"/><path d="M6 3 L13 2 Q14 2 14 3 V15 Q14 16 13 16 L6 17Z" fill="#f6e08a" stroke="#c2a23e" stroke-width=".6"/><path d="M11 9 V13" stroke="#8aa8d8" stroke-width="1"/></svg><svg class="p" style="left:130.0px;top:751.5px;" width="8" height="10" viewBox="0 0 8 10"><circle cx="4" cy="3" r="2.300" fill="#c89a6a"/><path d="M0 10 Q0 5.500 4 5.500 Q8 5.500 8 10Z" fill="#3a9a4a"/></svg>
<svg class="p" style="left:143.0px;top:743.5px;" width="18" height="18" viewBox="0 0 18 18"><rect x="3" y="2" width="13" height="10" rx="1" fill="#d8dde4" stroke="#7a828c" stroke-width=".7"/><rect x="4.500" y="3.500" width="10" height="7" fill="#2a4ad0"/><path d="M7 15.500 H12 L11 12 H8Z" fill="#b8c0c8"/><rect x="1" y="7" width="3" height="9" fill="#c8ced6" stroke="#7a828c" stroke-width=".5"/></svg>
<svg class="p" style="left:166.0px;top:743.5px;" width="18" height="18" viewBox="0 0 18 18"><path d="M3.500 2.500 H12.500 L14.500 4.500 V16.500 H3.500Z" fill="#fff" stroke="#8a929c" stroke-width=".7"/><path d="M5 5.5 H13.500" stroke="#9aa4b2" stroke-width=".7"/><path d="M5 7.5 H13.500" stroke="#9aa4b2" stroke-width=".7"/><path d="M5 9.5 H13.500" stroke="#9aa4b2" stroke-width=".7"/><path d="M5 11.5 H13.500" stroke="#9aa4b2" stroke-width=".7"/><path d="M5 13.5 H13.500" stroke="#9aa4b2" stroke-width=".7"/><path d="M4 2 H13" stroke="#6a727c" stroke-width="1.200" stroke-dasharray="1 1"/></svg>
<svg class="p" style="left:189.0px;top:743.5px;" width="18" height="18" viewBox="0 0 18 18"><circle cx="6.500" cy="6.500" r="5.500" fill="#3a9ae8"/><path d="M3 5 Q6 2 8 4 Q7 7 4 8Z" fill="#5aca4a"/><rect x="7" y="8" width="9" height="6.500" fill="#2a4ad0" stroke="#c8d0da" stroke-width="1"/><path d="M10 16.500 H13" stroke="#c8d0da" stroke-width="1.300"/></svg>
<svg class="p" style="left:212.0px;top:743.5px;" width="18" height="18" viewBox="0 0 18 18"><rect x="2" y="2" width="14" height="10" rx="1" fill="#e8f0fa" stroke="#5a8ad0" stroke-width="1"/><rect x="3" y="3" width="12" height="2" fill="#3a7ae0"/><circle cx="6.500" cy="8.200" r="1.800" fill="#f0a030"/><path d="M10 7.500 H14 M10 9.500 H14" stroke="#5a8ad0" stroke-width="1"/><path d="M6 16.500 Q9 11.500 12 16.500Z" fill="#b8c0c8"/></svg>
<svg class="p" style="left:235.0px;top:743.5px;" width="18" height="18" viewBox="0 0 18 18"><path d="M3.500 4 H14.500 L13.300 16.500 H4.700Z" fill="#a8c4e0" fill-opacity=".75" stroke="#d8e4f0" stroke-width=".8"/><ellipse cx="9" cy="4" rx="5.500" ry="1.600" fill="#d4e2f0" stroke="#e8f0f8" stroke-width=".6"/><circle cx="9" cy="10.500" r="2.600" fill="none" stroke="#5a9ae0" stroke-width="1.200"/></svg>
<svg class="p" style="left:258.0px;top:743.5px;" width="18" height="18" viewBox="0 0 16 16"><text x="8.600" y="15.300" transform="translate(8.400 0) scale(1.130 1) translate(-8.400 0)" text-anchor="middle" font-family="'Liberation Sans',sans-serif" font-weight="bold" font-size="26" fill="#3fa6ea" stroke="#2a86d4" stroke-width=".35">e</text><path d="M4.200 15.300 Q-.6 16 .7 10.800 Q2.800 3.800 9.800 1.200 Q15.400 -.5 15.900 3 Q16 4.300 15.300 5.600" fill="none" stroke="#f6b414" stroke-width="1.350" stroke-linecap="round"/></svg>
<svg class="p" style="left:281.0px;top:743.5px;" width="18" height="18" viewBox="0 0 18 18"><circle cx="9" cy="9" r="8" fill="#e8483a"/><path d="M9 9 L2.100 13 A8 8 0 0 0 9.800 17 L13 11.300Z" fill="#2ea44e"/><path d="M9 9 L9.800 17 A8 8 0 0 0 16 5 L9 5Z" fill="#f8c818"/><path d="M9 9 L16 5 A8 8 0 0 0 2.100 5 L5.500 11Z" fill="#e8483a"/><path d="M2.100 5 L5.500 11 L2.100 13 A8 8 0 0 1 2.100 5Z" fill="#2ea44e"/><circle cx="9" cy="9" r="3.800" fill="#fff"/><circle cx="9" cy="9" r="3" fill="#3c84e8"/></svg>
<svg class="p" style="left:304.0px;top:743.5px;" width="18" height="18" viewBox="0 0 18 18"><circle cx="9" cy="9" r="8.200" fill="#d8a818" stroke="#6a4a08" stroke-width=".8"/><circle cx="9" cy="9" r="6.200" fill="#f2cc3a"/><text x="9" y="12.2" text-anchor="middle" font-family="'Liberation Sans',sans-serif" font-size="8.5" font-weight="bold" fill="#1a1408" font-style="italic">UE</text></svg>
<svg class="p" style="left:327.0px;top:743.5px;" width="18" height="18" viewBox="0 0 18 18"><rect x="1" y="1" width="16" height="16" fill="#b0101a"/><text x="9" y="13.5" text-anchor="middle" font-family="'Liberation Sans',sans-serif" font-size="12" font-weight="bold" fill="#fff" font-style="italic">Fz</text></svg>
<svg class="p" style="left:350.0px;top:743.5px;" width="18" height="18" viewBox="0 0 18 18"><g transform="rotate(-45 9 9)"><rect x="1.500" y="5.800" width="15" height="6.400" rx="3.200" fill="#f4f4f0" stroke="#8a8a80" stroke-width=".6"/><path d="M9 5.800 H13.300 A3.200 3.200 0 0 1 13.300 12.200 H9Z" fill="#5ab82a"/></g></svg>
<svg class="p" style="left:373.0px;top:743.5px;" width="18" height="18" viewBox="0 0 18 18"><path d="M4 2 L10 1 V17 L4 16Z" fill="#e8c860" stroke="#b89a3a" stroke-width=".6"/><path d="M6 3 L13 2 Q14 2 14 3 V15 Q14 16 13 16 L6 17Z" fill="#f6e08a" stroke="#c2a23e" stroke-width=".6"/><path d="M11 9 V13" stroke="#8aa8d8" stroke-width="1"/></svg>
<svg class="p" style="left:396.0px;top:743.5px;" width="18" height="18" viewBox="0 0 18 18"><path d="M4 2 L10 1 V17 L4 16Z" fill="#e8c860" stroke="#b89a3a" stroke-width=".6"/><path d="M6 3 L13 2 Q14 2 14 3 V15 Q14 16 13 16 L6 17Z" fill="#f6e08a" stroke="#c2a23e" stroke-width=".6"/><path d="M11 9 V13" stroke="#8aa8d8" stroke-width="1"/></svg>
<svg class="p" style="left:419.0px;top:743.5px;" width="18" height="18" viewBox="0 0 18 18"><path d="M4 2 L10 1 V17 L4 16Z" fill="#e8c860" stroke="#b89a3a" stroke-width=".6"/><path d="M6 3 L13 2 Q14 2 14 3 V15 Q14 16 13 16 L6 17Z" fill="#f6e08a" stroke="#c2a23e" stroke-width=".6"/><path d="M11 9 V13" stroke="#8aa8d8" stroke-width="1"/></svg>
<svg class="p" style="left:442.0px;top:743.5px;" width="18" height="18" viewBox="0 0 18 18"><path d="M3.500 2.500 H12.500 L14.500 4.500 V16.500 H3.500Z" fill="#fff" stroke="#8a929c" stroke-width=".7"/><path d="M5 5.5 H13.500" stroke="#9aa4b2" stroke-width=".7"/><path d="M5 7.5 H13.500" stroke="#9aa4b2" stroke-width=".7"/><path d="M5 9.5 H13.500" stroke="#9aa4b2" stroke-width=".7"/><path d="M5 11.5 H13.500" stroke="#9aa4b2" stroke-width=".7"/><path d="M5 13.5 H13.500" stroke="#9aa4b2" stroke-width=".7"/><path d="M4 2 H13" stroke="#6a727c" stroke-width="1.200" stroke-dasharray="1 1"/></svg>
<svg class="p" style="left:465.0px;top:743.5px;" width="18" height="18" viewBox="0 0 18 18"><path d="M4 2 L10 1 V17 L4 16Z" fill="#e8c860" stroke="#b89a3a" stroke-width=".6"/><path d="M6 3 L13 2 Q14 2 14 3 V15 Q14 16 13 16 L6 17Z" fill="#f6e08a" stroke="#c2a23e" stroke-width=".6"/><path d="M11 9 V13" stroke="#8aa8d8" stroke-width="1"/></svg>
<svg class="p" style="left:488.0px;top:743.5px;" width="18" height="18" viewBox="0 0 18 18"><path d="M3.500 2.500 H12.500 L14.500 4.500 V16.500 H3.500Z" fill="#fff" stroke="#8a929c" stroke-width=".7"/><path d="M5 5.5 H13.500" stroke="#9aa4b2" stroke-width=".7"/><path d="M5 7.5 H13.500" stroke="#9aa4b2" stroke-width=".7"/><path d="M5 9.5 H13.500" stroke="#9aa4b2" stroke-width=".7"/><path d="M5 11.5 H13.500" stroke="#9aa4b2" stroke-width=".7"/><path d="M5 13.5 H13.500" stroke="#9aa4b2" stroke-width=".7"/><path d="M4 2 H13" stroke="#6a727c" stroke-width="1.200" stroke-dasharray="1 1"/></svg>
<svg class="p" style="left:511.0px;top:743.5px;" width="18" height="18" viewBox="0 0 18 18"><path d="M3.500 2.500 H12.500 L14.500 4.500 V16.500 H3.500Z" fill="#fff" stroke="#8a929c" stroke-width=".7"/><path d="M5 5.5 H13.500" stroke="#9aa4b2" stroke-width=".7"/><path d="M5 7.5 H13.500" stroke="#9aa4b2" stroke-width=".7"/><path d="M5 9.5 H13.500" stroke="#9aa4b2" stroke-width=".7"/><path d="M5 11.5 H13.500" stroke="#9aa4b2" stroke-width=".7"/><path d="M5 13.5 H13.500" stroke="#9aa4b2" stroke-width=".7"/><path d="M4 2 H13" stroke="#6a727c" stroke-width="1.200" stroke-dasharray="1 1"/></svg>
<svg class="p" style="left:534.0px;top:743.5px;" width="18" height="18" viewBox="0 0 18 18"><rect x="2" y="2" width="14" height="10" rx="1" fill="#e8f0fa" stroke="#5a8ad0" stroke-width="1"/><rect x="3" y="3" width="12" height="2" fill="#3a7ae0"/><circle cx="6.500" cy="8.200" r="1.800" fill="#f0a030"/><path d="M10 7.500 H14 M10 9.500 H14" stroke="#5a8ad0" stroke-width="1"/><path d="M6 16.500 Q9 11.500 12 16.500Z" fill="#b8c0c8"/></svg>
<svg class="p" style="left:557.0px;top:743.5px;" width="18" height="18" viewBox="0 0 18 18"><rect x="1" y="2.500" width="16" height="14" fill="#101010"/><path d="M1 4.500 H17" stroke="#f0d020" stroke-width="2" stroke-dasharray="2.200 1.200"/><text x="9" y="14.5" text-anchor="middle" font-family="'Liberation Sans',sans-serif" font-size="8" font-weight="bold" fill="#fff" >GIF</text></svg>
<svg class="p" style="left:580.0px;top:743.5px;" width="18" height="18" viewBox="0 0 18 18"><rect x="1.500" y="1.500" width="15" height="15" rx="2.5" fill="#f6c80a" stroke="none" stroke-width=".8"/><circle cx="9" cy="9" r="5.300" fill="#fff"/><path d="M7.300 6 L12 9 L7.300 12Z" fill="#f6c80a"/></svg>
<svg class="p" style="left:603.0px;top:743.5px;" width="18" height="18" viewBox="0 0 18 18"><rect x="1.500" y="1.500" width="15" height="15" rx="1" fill="#e8f4ea" stroke="#2a8a4a" stroke-width=".8"/><text x="9" y="14.5" text-anchor="middle" font-family="'Liberation Sans',sans-serif" font-size="14.5" font-weight="bold" fill="#1a8a3a" >X</text></svg>
<svg class="p" style="left:626.0px;top:743.5px;" width="18" height="18" viewBox="0 0 18 18"><circle cx="9" cy="7" r="5.500" fill="#f0a030"/><circle cx="7" cy="6" r="2" fill="#fff"/><circle cx="11.500" cy="6" r="2" fill="#fff"/><circle cx="7.300" cy="6.200" r=".9" fill="#111"/><circle cx="11.200" cy="6.200" r=".9" fill="#111"/><path d="M3 12 Q9 9 15 12 L13 17 H5Z" fill="#3ab04a"/><path d="M7 12 L9 16 L11 12Z" fill="#e83a3a"/><path d="M3.500 12.500 L6 16" stroke="#3a6ae8" stroke-width="2"/></svg>
<svg class="p" style="left:649.0px;top:743.5px;" width="18" height="18" viewBox="0 0 18 18"><rect x="1.500" y="1.500" width="15" height="15" rx="1" fill="#eaf0fa" stroke="#2a5ab8" stroke-width=".8"/><text x="9" y="14.2" text-anchor="middle" font-family="'Liberation Sans',sans-serif" font-size="13" font-weight="bold" fill="#1a4ab8" >W</text></svg>
<svg class="p" style="left:672.0px;top:743.5px;" width="18" height="18" viewBox="0 0 18 18"><rect x="1.500" y="3" width="15" height="12" fill="#f0f0ea" stroke="#6a6a6a" stroke-width=".8"/><rect x="3" y="6" width="5" height="7" fill="#5a8a5a"/><path d="M9.500 7 H15 M9.500 9.500 H15 M9.500 12 H15" stroke="#8a8a8a" stroke-width="1"/></svg>
<svg class="p" style="left:695.0px;top:743.5px;" width="18" height="18" viewBox="0 0 18 18"><rect x="7" y="1.500" width="9" height="7" fill="#2a4ad0" stroke="#d8dde4" stroke-width="1"/><rect x="1.500" y="8.500" width="9" height="7" fill="#2a4ad0" stroke="#d8dde4" stroke-width="1"/><path d="M4 4 L13 13" stroke="#f0e02a" stroke-width="1.800"/><path d="M3 3 L7 4 L4 7Z M14.500 14.500 L10.500 13.500 L13.500 10.500Z" fill="#f0e02a"/></svg>
<svg class="p" style="left:718.0px;top:743.5px;" width="18" height="18" viewBox="0 0 18 18"><rect x="1.500" y="1.500" width="15" height="15" rx="1.5" fill="#f6e8e0" stroke="#d8501a" stroke-width=".8"/><text x="9.5" y="14.2" text-anchor="middle" font-family="'Liberation Sans',sans-serif" font-size="13.5" font-weight="bold" fill="#d8501a" >P</text></svg>
<svg class="p" style="left:741.0px;top:743.5px;" width="18" height="18" viewBox="0 0 18 18"><rect x="1" y="1" width="16" height="16" rx="1" fill="#fae100"/><ellipse cx="9" cy="8.500" rx="5.800" ry="4.600" fill="#4a2a22"/><path d="M6 12 L5.500 15 L9 12.500Z" fill="#4a2a22"/></svg>
<svg class="p" style="left:764.0px;top:743.5px;" width="18" height="18" viewBox="0 0 18 18"><circle cx="9" cy="9" r="7.5" fill="#f8f8f8" stroke="#888" stroke-width=".8"/><path d="M6 3.500 V12 H14.500 M3.500 6 H12 V14.500" fill="none" stroke="#222" stroke-width="1.300"/><path d="M5 16.500 H8 M10 16.500 H13" stroke="#e8a020" stroke-width="1.600"/></svg>
<svg class="p" style="left:787.0px;top:743.5px;" width="18" height="18" viewBox="0 0 18 18"><circle cx="9" cy="9" r="7.8" fill="#f6f6f6" stroke="#555" stroke-width=".8"/><ellipse cx="7.300" cy="11.800" rx="2.600" ry="2" fill="#111"/><path d="M9.400 12 V4.200 Q12.500 5 12.800 8.500" stroke="#111" stroke-width="1.500" fill="none"/><path d="M1.800 8 A7.500 7.500 0 0 0 4.500 15 Q3 10 5 4 Q3 5 1.800 8Z" fill="#222"/><path d="M5 16.900 H8 M10 16.900 H13" stroke="#e8a020" stroke-width="1.500"/></svg>
<svg class="p" style="left:810.0px;top:743.5px;" width="18" height="18" viewBox="0 0 18 18"><rect x="2" y="5" width="11" height="11" rx="1.500" fill="#1a1a1a"/><path d="M13 9 L17 6.500 V14.500 L13 12Z" fill="#e8701a"/><circle cx="6" cy="4.500" r="2.600" fill="#e8701a"/><circle cx="11.500" cy="4" r="3" fill="#f4f0e6" stroke="#5a4a3a" stroke-width=".5"/><circle cx="11.800" cy="4" r="1.200" fill="#e8481a"/><rect x="4.500" y="8" width="5" height="5" fill="#e8701a"/></svg>
<svg class="p" style="left:833.0px;top:743.5px;" width="18" height="18" viewBox="0 0 18 18"><ellipse cx="9" cy="11" rx="5.500" ry="5.500" fill="#f4f0e6" stroke="#8a7a5a" stroke-width=".6"/><circle cx="6.500" cy="5.500" r="3.200" fill="#fff" stroke="#5a4a3a" stroke-width=".6"/><circle cx="11.500" cy="5.500" r="3.200" fill="#fff" stroke="#5a4a3a" stroke-width=".6"/><circle cx="7" cy="5.800" r="1.200" fill="#111"/><circle cx="11.800" cy="5.800" r="1.600" fill="#e8481a"/><path d="M4 16 H7.500 M10.500 16 H14" stroke="#e88a1a" stroke-width="2"/></svg>
<svg class="p" style="left:856.0px;top:743.5px;" width="18" height="18" viewBox="0 0 18 18"><rect x="1.500" y="2.500" width="15" height="13" rx="2.500" fill="#1a2a22" stroke="#0a120e" stroke-width=".8"/><circle cx="9" cy="8.500" r="4.800" fill="#2aa84a"/><path d="M7.500 6 L11.500 8.500 L7.500 11Z" fill="#0a3a1a"/><path d="M3 16.500 H15" stroke="#3a4a42" stroke-width="1.200"/></svg>
<svg class="p" style="left:879.0px;top:743.5px;" width="18" height="18" viewBox="0 0 18 18"><rect x="2.500" y="1" width="10" height="16" fill="#2a5aa8"/><rect x="4.200" y="2.500" width="6.600" height="3.600" fill="#e8882a"/><rect x="4.200" y="7.200" width="6.600" height="3.600" fill="#e8882a"/><rect x="4.200" y="11.900" width="6.600" height="3.600" fill="#e8882a"/><rect x="14" y="1" width="2" height="16" fill="#e8a04a"/></svg>
<svg class="p" style="left:902.0px;top:743.5px;" width="18" height="18" viewBox="0 0 18 18"><path d="M3.500 2.500 H12.500 L14.500 4.500 V16.500 H3.500Z" fill="#fff" stroke="#8a929c" stroke-width=".7"/><path d="M5 5.5 H13.500" stroke="#9aa4b2" stroke-width=".7"/><path d="M5 7.5 H13.500" stroke="#9aa4b2" stroke-width=".7"/><path d="M5 9.5 H13.500" stroke="#9aa4b2" stroke-width=".7"/><path d="M5 11.5 H13.500" stroke="#9aa4b2" stroke-width=".7"/><path d="M5 13.5 H13.500" stroke="#9aa4b2" stroke-width=".7"/><path d="M4 2 H13" stroke="#6a727c" stroke-width="1.200" stroke-dasharray="1 1"/></svg>
<svg class="p" style="left:925.0px;top:743.5px;" width="18" height="18" viewBox="0 0 18 18"><path d="M5 4 Q5 2 7.500 2.500 Q9 1.500 10.500 3 Q14.500 3 14.500 7.500 Q15 14 11 15 Q9.500 15.500 9.500 13.500 Q6 14 4.500 10 Q2.500 9 3 7 Q3.500 5.500 5 5.500Z" fill="#2aa84a"/></svg>
<svg class="p" style="left:948.0px;top:743.5px;" width="18" height="18" viewBox="0 0 18 18"><rect x="1.500" y="1.500" width="15" height="15" rx="1.5" fill="#2a7ad8" stroke="#d8e8f8" stroke-width=".8"/><circle cx="9" cy="5.500" r="1.800" fill="#fff"/><path d="M5 8.500 H13 M9 8.500 V12 M6 15 Q9 10.500 12 15" stroke="#fff" stroke-width="1.500" fill="none"/></svg>
<svg class="p" style="left:971.0px;top:743.5px;" width="18" height="18" viewBox="0 0 18 18"><rect x="3.500" y="1.500" width="11" height="15" rx="1" fill="#eef2f8" stroke="#8a9ab0" stroke-width=".7"/><rect x="5" y="3" width="8" height="3.500" fill="#8ab8e8"/><rect x="5" y="8.0" width="2" height="1.600" fill="#7a9ac8"/><rect x="5" y="10.6" width="2" height="1.600" fill="#7a9ac8"/><rect x="5" y="13.2" width="2" height="1.600" fill="#7a9ac8"/><rect x="8" y="8.0" width="2" height="1.600" fill="#7a9ac8"/><rect x="8" y="10.6" width="2" height="1.600" fill="#7a9ac8"/><rect x="8" y="13.2" width="2" height="1.600" fill="#7a9ac8"/><rect x="11" y="8.0" width="2" height="1.600" fill="#7a9ac8"/><rect x="11" y="10.6" width="2" height="1.600" fill="#7a9ac8"/><rect x="11" y="13.2" width="2" height="1.600" fill="#7a9ac8"/></svg>
<svg class="p" style="left:994.0px;top:743.5px;" width="18" height="18" viewBox="0 0 18 18"><path d="M3 6 L13 3 L16 12 L6 16Z" fill="#f4e04a" stroke="#b8a020" stroke-width=".6"/><circle cx="11" cy="3.500" r="2.400" fill="#2a9a6a"/><path d="M11 5 L9.500 9" stroke="#555" stroke-width="1"/></svg>
<svg class="p" style="left:1017.0px;top:743.5px;" width="18" height="18" viewBox="0 0 18 18"><rect x="1.500" y="1.500" width="15" height="15" rx="2" fill="#4a4a4a" stroke="#2a2a2a" stroke-width=".8"/><rect x="4" y="5" width="10" height="8" rx="1" fill="#e8e8e0"/><text x="9" y="12" text-anchor="middle" font-family="'Liberation Sans',sans-serif" font-size="6.5" font-weight="bold" fill="#222" >AE</text></svg>
<svg class="p" style="left:1040.0px;top:743.5px;" width="18" height="18" viewBox="0 0 18 18"><path d="M4 2 L10 1 V17 L4 16Z" fill="#e8c860" stroke="#b89a3a" stroke-width=".6"/><path d="M6 3 L13 2 Q14 2 14 3 V15 Q14 16 13 16 L6 17Z" fill="#f6e08a" stroke="#c2a23e" stroke-width=".6"/><path d="M11 9 V13" stroke="#8aa8d8" stroke-width="1"/></svg>
<svg class="p" style="left:1063.0px;top:743.5px;" width="18" height="18" viewBox="0 0 18 18"><path d="M3.500 3 H14 L13.500 16 H3Z" fill="#e4f0fa" stroke="#5a88b8" stroke-width=".8"/><path d="M5 6 H13" stroke="#7aa0c8" stroke-width=".7"/><path d="M5 8 H13" stroke="#7aa0c8" stroke-width=".7"/><path d="M5 10 H13" stroke="#7aa0c8" stroke-width=".7"/><path d="M5 12 H13" stroke="#7aa0c8" stroke-width=".7"/><path d="M5 14 H13" stroke="#7aa0c8" stroke-width=".7"/><path d="M4 2.500 H14" stroke="#3a5a88" stroke-width="1.400" stroke-dasharray="1 1"/></svg>
<svg class="p" style="left:1086.0px;top:743.5px;" width="18" height="18" viewBox="0 0 18 18"><rect x="1.500" y="1.500" width="15" height="15" rx="2.5" fill="#2a2a1a" stroke="#111" stroke-width=".8"/><path d="M9 4 L13 8.500 H10.800 V13 H7.200 V8.500 H5Z" fill="#f0d02a"/><path d="M5 14 H13" stroke="#f0d02a" stroke-width="1.300"/></svg>
<svg class="p" style="left:1109.0px;top:743.5px;" width="18" height="18" viewBox="0 0 18 18"><ellipse cx="9" cy="9" rx="7.800" ry="8.400" fill="#e8182c"/><ellipse cx="9" cy="9" rx="3.600" ry="6" fill="#1d5384"/></svg>
<svg class="p" style="left:1132.0px;top:743.5px;" width="18" height="18" viewBox="0 0 18 18"><circle cx="9" cy="4.500" r="3" fill="#3a6ae8"/><circle cx="4.500" cy="11.500" r="3" fill="#3a6ae8"/><circle cx="13.500" cy="11.500" r="3" fill="#3a6ae8"/><circle cx="9" cy="9.500" r="3.400" fill="#3ab84a"/><circle cx="9" cy="14.500" r="2" fill="#5a8af0"/></svg>
<svg class="p" style="left:1192.5px;top:736px;" width="9" height="6" viewBox="0 0 9 6"><path d="M4.500 0 L9 5.500 H0Z" fill="#fff"/></svg>
<svg class="p" style="left:1213px;top:731px;" width="17" height="16" viewBox="0 0 17 16"><path d="M1 5.500 H4 L8 1.500 V14.500 L4 10.500 H1Z" fill="#f4f4f4" stroke="#555" stroke-width=".6"/><path d="M10 5.500 Q11.500 8 10 10.500 M12 3.800 Q14.500 8 12 12.200 M14 2.500 Q17 8 14 13.500" fill="none" stroke="#fff" stroke-width="1.100"/></svg>
<svg class="p" style="left:1238px;top:731px;" width="15" height="16" viewBox="0 0 15 16"><path d="M1 3 H9 V14.500 H1Z" fill="none" stroke="#fff" stroke-width="1.400"/><path d="M3 1 H7 V3 H3Z" fill="#fff"/><path d="M7 5 H13 V9 Q13 11 10 11 Q7 11 7 9Z" fill="#fff" stroke="#333" stroke-width=".6"/><path d="M8.500 2.500 V5 M11.500 2.500 V5 M10 11 V15" stroke="#fff" stroke-width="1.400"/></svg>
<div class="p" style="left:1278.9px;top:720.0px;font-size:11.5px;line-height:16px;color:#fff;font-weight:350;transform:scaleX(1.13);transform-origin:0 50%;">오전 1:53</div>
<div class="p" style="left:1272.1px;top:740.7px;font-size:14.1px;line-height:20px;color:#fff;transform:scaleX(0.92);transform-origin:0 50%;">2019-12-15</div>
<div class="p" style="left:1351px;top:709px;width:15px;height:59px;border-left:1px solid #0e2238;background:linear-gradient(180deg,rgba(255,255,255,.28),rgba(255,255,255,.08) 50%,rgba(255,255,255,.12));box-shadow:inset 1px 0 0 rgba(255,255,255,.35)"></div>
</div>
</body>
</html>
